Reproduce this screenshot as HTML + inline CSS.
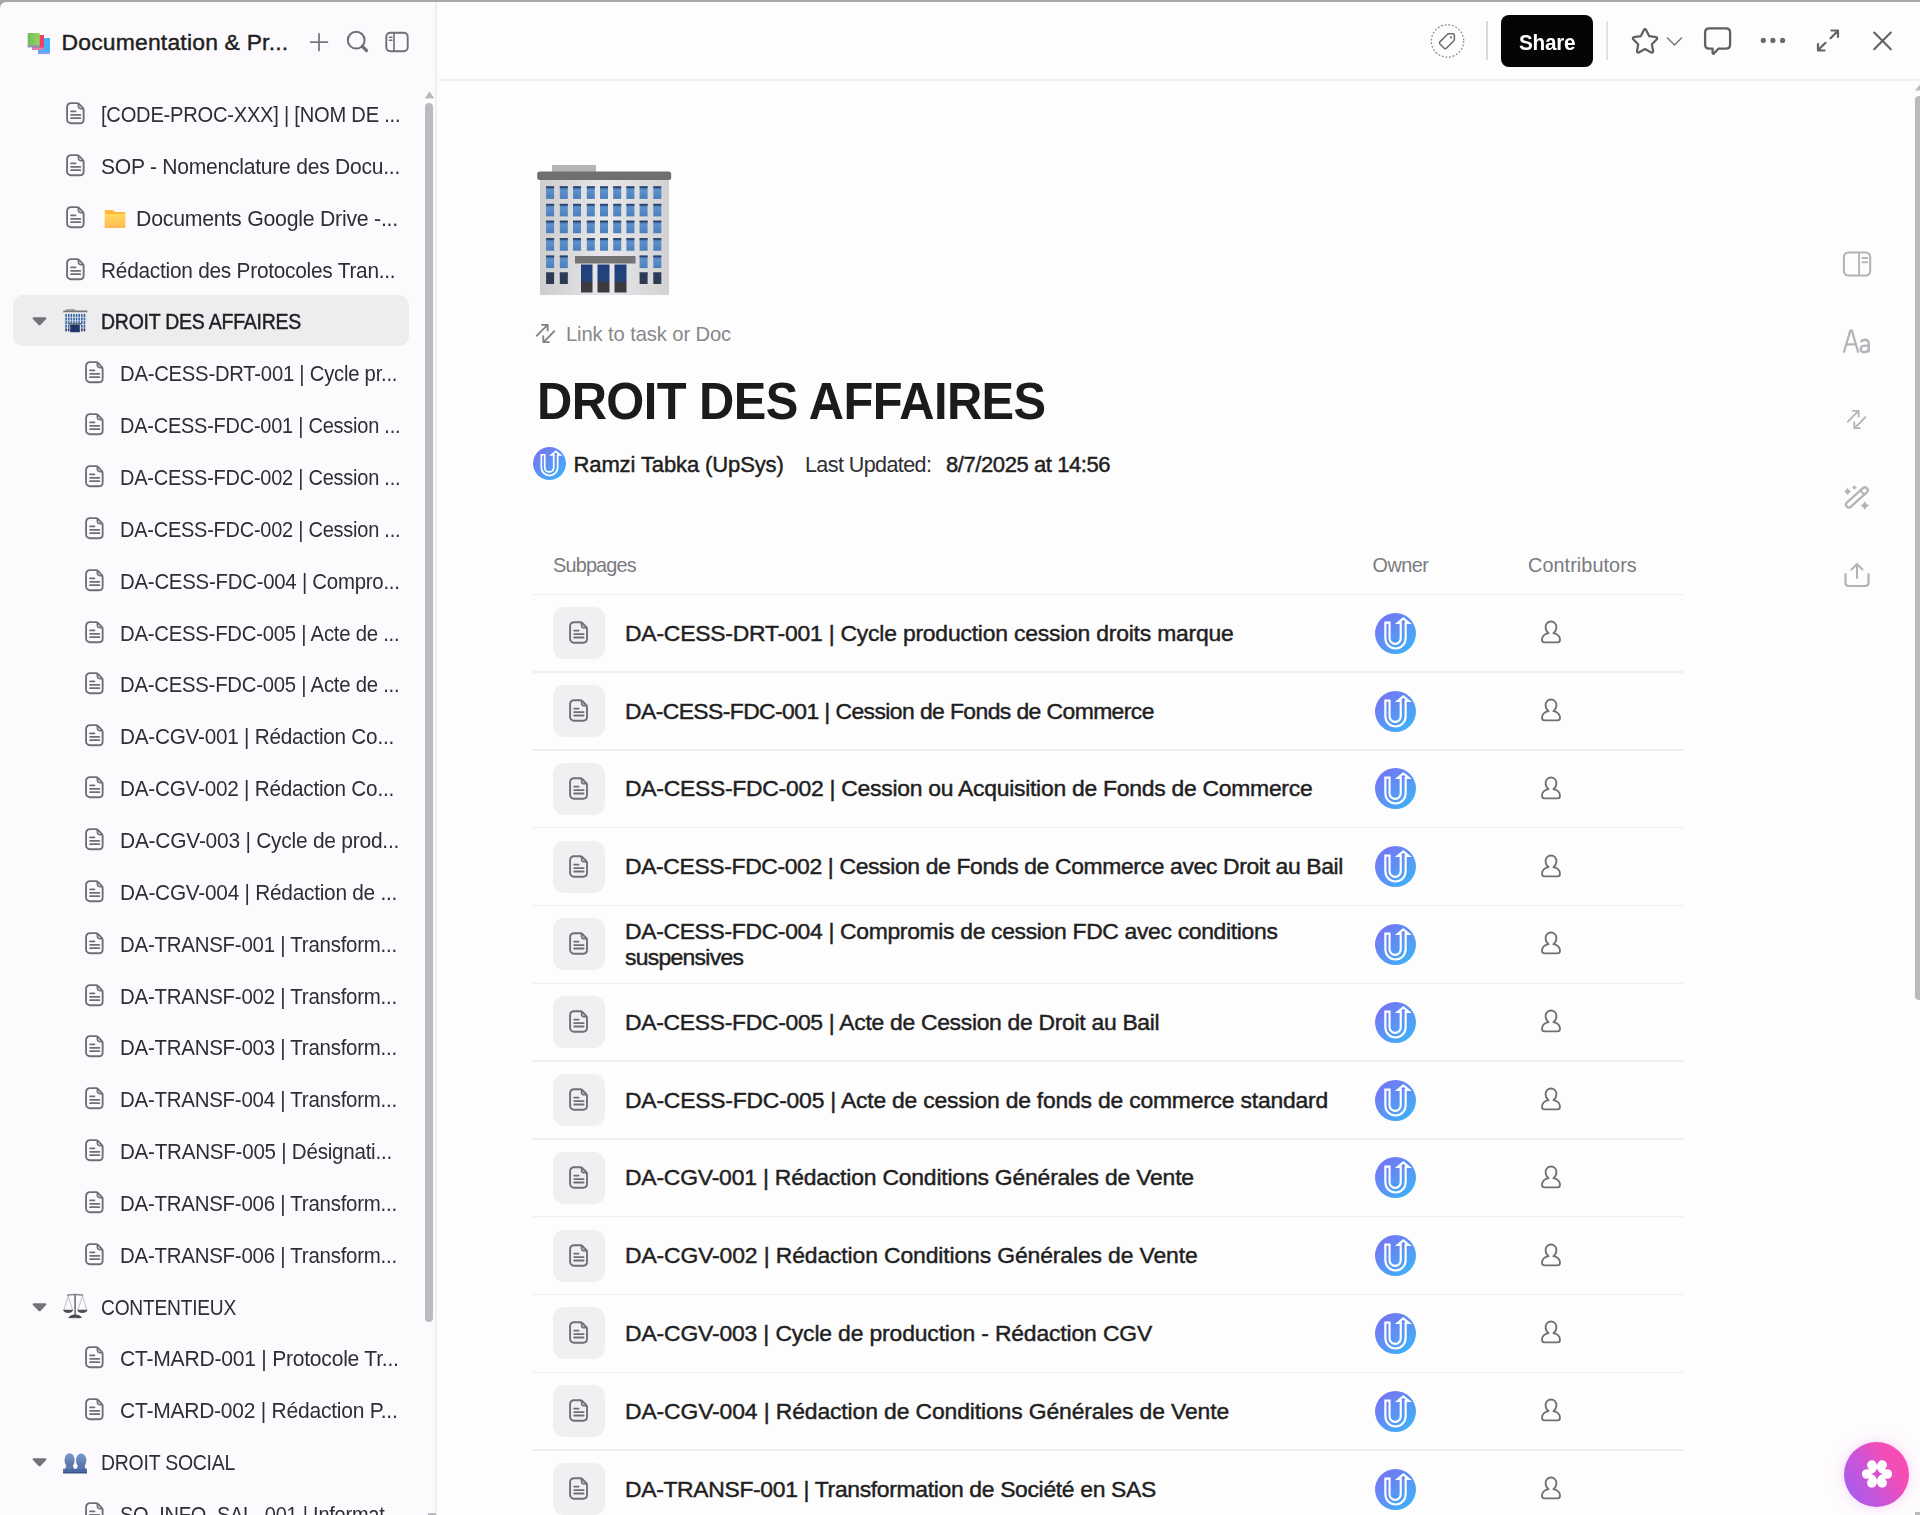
<!DOCTYPE html><html><head><meta charset="utf-8"><style>
html,body{margin:0;padding:0;width:1920px;height:1515px;overflow:hidden;background:#fefdfe;}
body{position:relative;font-family:"Liberation Sans",sans-serif;}
.t{position:absolute;white-space:nowrap;line-height:1;}
.semi{-webkit-text-stroke:0.45px currentColor;}
.ic{position:absolute;line-height:0;}
.ic svg{display:block;overflow:visible;}
</style></head><body>
<div style="position:absolute;left:0;top:0;width:1920px;height:2px;background:#a7a7aa"></div>
<div style="position:absolute;left:0;top:0;width:8px;height:8px;background:#a7a7aa"></div>
<div style="position:absolute;left:0;top:2px;width:435px;height:1513px;background:#fcfafd;border-top-left-radius:6px"></div>
<div style="position:absolute;left:435px;top:2px;width:2px;height:1513px;background:#efeef1"></div>
<div style="position:absolute;left:438px;top:79px;width:1482px;height:2px;background:#f0eff2"></div>
<div class="ic" style="left:27px;top:32px"><svg width="24" height="23" viewBox="0 0 24 23">
<defs><linearGradient id="bg1" x1="0" y1="0" x2="1" y2="0"><stop offset="0" stop-color="#6cbf5a"/><stop offset="1" stop-color="#98d45f"/></linearGradient></defs>
<rect x="11" y="6" width="12" height="15" fill="#3fb3f6"/><rect x="11" y="19.8" width="12" height="2.2" fill="#8d9cf4"/>
<rect x="5" y="3" width="12" height="13.5" fill="#f13f68"/><rect x="5" y="15.6" width="12" height="2.4" fill="#dd7fb0"/>
<rect x="0.7" y="1" width="12" height="13" fill="url(#bg1)"/><rect x="0.7" y="13" width="12" height="2.5" fill="#8d9ab0"/>
</svg></div>
<div class="ic" style="left:309px;top:32px"><svg width="20" height="20" viewBox="0 0 20 20"><path d="M10 2v16.5M1.8 10.2h16.6" stroke="#77777c" stroke-width="1.8" stroke-linecap="round"/></svg></div>
<div class="ic" style="left:346px;top:30px"><svg width="24" height="24" viewBox="0 0 24 24"><circle cx="10.2" cy="10.2" r="8.4" fill="none" stroke="#6f6f74" stroke-width="2"/><path d="M16.3 16.3l4.2 4.2" stroke="#6f6f74" stroke-width="3.2" stroke-linecap="round"/></svg></div>
<div class="ic" style="left:385px;top:31px"><svg width="24" height="22" viewBox="0 0 24 22"><rect x="1.3" y="1.8" width="21.4" height="18.5" rx="4" fill="none" stroke="#6f6f74" stroke-width="1.9"/><path d="M9 2v18M4.5 6.2h2.4M4.5 9.2h2.4" stroke="#6f6f74" stroke-width="1.6" stroke-linecap="round"/></svg></div>
<div style="position:absolute;left:13px;top:295px;width:396px;height:51px;background:#edecef;border-radius:10px"></div>
<div class="ic" style="left:424.5px;top:91px"><svg width="9" height="8" viewBox="0 0 9 8"><path d="M4.5 1L8.5 7H0.5z" fill="#bcbbbe" stroke="#bcbbbe" stroke-width="1" stroke-linejoin="round"/></svg></div>
<div style="position:absolute;left:425px;top:103px;width:8px;height:1219px;background:#bcbabe;border-radius:4px"></div>
<div style="position:absolute;left:428px;top:1513px;width:8px;height:2px;background:#bcbabe"></div>
<div class="ic" style="left:65.5px;top:102.0px;transform:scale(0.980);transform-origin:0 0"><svg class="doc" width="20" height="23" viewBox="0 0 20 23"><path d="M5 1.2h6.3c.8 0 1.3.2 1.9.8l4 4c.6.6.8 1.1.8 1.9V17.8c0 2.2-1.6 3.9-3.9 3.9H5c-2.2 0-3.9-1.6-3.9-3.9V5c0-2.2 1.6-3.8 3.9-3.8z" fill="none" stroke="#6f6f74" stroke-width="1.9"/><path d="M12.6 1.4v2.8c0 1.5 1 2.6 2.6 2.6H18" fill="none" stroke="#6f6f74" stroke-width="1.6"/><path d="M5.2 9.6h4.4M5.2 13.1h9.4M5.2 16.5h9.4" stroke="#6f6f74" stroke-width="1.9" stroke-linecap="round"/></svg></div>
<div class="ic" style="left:65.5px;top:153.8px;transform:scale(0.980);transform-origin:0 0"><svg class="doc" width="20" height="23" viewBox="0 0 20 23"><path d="M5 1.2h6.3c.8 0 1.3.2 1.9.8l4 4c.6.6.8 1.1.8 1.9V17.8c0 2.2-1.6 3.9-3.9 3.9H5c-2.2 0-3.9-1.6-3.9-3.9V5c0-2.2 1.6-3.8 3.9-3.8z" fill="none" stroke="#6f6f74" stroke-width="1.9"/><path d="M12.6 1.4v2.8c0 1.5 1 2.6 2.6 2.6H18" fill="none" stroke="#6f6f74" stroke-width="1.6"/><path d="M5.2 9.6h4.4M5.2 13.1h9.4M5.2 16.5h9.4" stroke="#6f6f74" stroke-width="1.9" stroke-linecap="round"/></svg></div>
<div class="ic" style="left:65.5px;top:205.7px;transform:scale(0.980);transform-origin:0 0"><svg class="doc" width="20" height="23" viewBox="0 0 20 23"><path d="M5 1.2h6.3c.8 0 1.3.2 1.9.8l4 4c.6.6.8 1.1.8 1.9V17.8c0 2.2-1.6 3.9-3.9 3.9H5c-2.2 0-3.9-1.6-3.9-3.9V5c0-2.2 1.6-3.8 3.9-3.8z" fill="none" stroke="#6f6f74" stroke-width="1.9"/><path d="M12.6 1.4v2.8c0 1.5 1 2.6 2.6 2.6H18" fill="none" stroke="#6f6f74" stroke-width="1.6"/><path d="M5.2 9.6h4.4M5.2 13.1h9.4M5.2 16.5h9.4" stroke="#6f6f74" stroke-width="1.9" stroke-linecap="round"/></svg></div>
<div class="ic" style="left:104px;top:208.7px"><svg width="22" height="19" viewBox="0 0 22 19"><defs><linearGradient id="fg" x1="0" y1="0" x2="0" y2="1"><stop offset="0" stop-color="#ffe05e"/><stop offset="0.15" stop-color="#ffd35a"/><stop offset="1" stop-color="#ffbd55"/></linearGradient></defs><path d="M0.8 2.2c0-.8.5-1.3 1.3-1.3h6.2c.6 0 1 .3 1.4.7l1.3 1.5h9.4c.5 0 .8.4.8.8V18.5H0.8z" fill="#ffb83a"/><rect x="0.8" y="5.2" width="20.4" height="13.3" fill="url(#fg)"/><rect x="0.8" y="17.6" width="20.4" height="0.9" fill="#ffad45"/></svg></div>
<div class="ic" style="left:65.5px;top:257.6px;transform:scale(0.980);transform-origin:0 0"><svg class="doc" width="20" height="23" viewBox="0 0 20 23"><path d="M5 1.2h6.3c.8 0 1.3.2 1.9.8l4 4c.6.6.8 1.1.8 1.9V17.8c0 2.2-1.6 3.9-3.9 3.9H5c-2.2 0-3.9-1.6-3.9-3.9V5c0-2.2 1.6-3.8 3.9-3.8z" fill="none" stroke="#6f6f74" stroke-width="1.9"/><path d="M12.6 1.4v2.8c0 1.5 1 2.6 2.6 2.6H18" fill="none" stroke="#6f6f74" stroke-width="1.6"/><path d="M5.2 9.6h4.4M5.2 13.1h9.4M5.2 16.5h9.4" stroke="#6f6f74" stroke-width="1.9" stroke-linecap="round"/></svg></div>
<div class="ic" style="left:31.5px;top:316.4px"><svg width="15" height="10" viewBox="0 0 15 10"><path d="M1.8 1.2h11.4c1 0 1.5 1 .9 1.8L8.5 8.9c-.5.6-1.4.6-1.9 0L.9 3C.3 2.2.8 1.2 1.8 1.2z" fill="#737378"/></svg></div>
<div class="ic" style="left:63px;top:309px"><svg width="25" height="24" viewBox="0 0 25 24"><rect x="3" y="0" width="9" height="1.8" fill="#a9a9ac"/><rect x="0.3" y="1.5" width="24" height="2" fill="#747477"/><rect x="1" y="3.4" width="22.8" height="20" fill="#e6e6ea"/><rect x="2.30" y="5.0" width="1.6" height="2.9" fill="#3566a8"/><rect x="2.30" y="8.6" width="1.6" height="2.9" fill="#3566a8"/><rect x="2.30" y="12.2" width="1.6" height="2.9" fill="#3566a8"/><rect x="2.30" y="15.8" width="1.6" height="2.9" fill="#3566a8"/><rect x="2.30" y="19.4" width="1.6" height="2.9" fill="#2d3f66"/><rect x="4.92" y="5.0" width="1.6" height="2.9" fill="#3566a8"/><rect x="4.92" y="8.6" width="1.6" height="2.9" fill="#3566a8"/><rect x="4.92" y="12.2" width="1.6" height="2.9" fill="#3566a8"/><rect x="4.92" y="15.8" width="1.6" height="2.9" fill="#3566a8"/><rect x="4.92" y="19.4" width="1.6" height="2.9" fill="#2d3f66"/><rect x="7.54" y="5.0" width="1.6" height="2.9" fill="#3566a8"/><rect x="7.54" y="8.6" width="1.6" height="2.9" fill="#3566a8"/><rect x="7.54" y="12.2" width="1.6" height="2.9" fill="#3566a8"/><rect x="10.16" y="5.0" width="1.6" height="2.9" fill="#3566a8"/><rect x="10.16" y="8.6" width="1.6" height="2.9" fill="#3566a8"/><rect x="10.16" y="12.2" width="1.6" height="2.9" fill="#3566a8"/><rect x="12.78" y="5.0" width="1.6" height="2.9" fill="#3566a8"/><rect x="12.78" y="8.6" width="1.6" height="2.9" fill="#3566a8"/><rect x="12.78" y="12.2" width="1.6" height="2.9" fill="#3566a8"/><rect x="15.40" y="5.0" width="1.6" height="2.9" fill="#3566a8"/><rect x="15.40" y="8.6" width="1.6" height="2.9" fill="#3566a8"/><rect x="15.40" y="12.2" width="1.6" height="2.9" fill="#3566a8"/><rect x="18.02" y="5.0" width="1.6" height="2.9" fill="#3566a8"/><rect x="18.02" y="8.6" width="1.6" height="2.9" fill="#3566a8"/><rect x="18.02" y="12.2" width="1.6" height="2.9" fill="#3566a8"/><rect x="18.02" y="15.8" width="1.6" height="2.9" fill="#3566a8"/><rect x="18.02" y="19.4" width="1.6" height="2.9" fill="#2d3f66"/><rect x="20.64" y="5.0" width="1.6" height="2.9" fill="#3566a8"/><rect x="20.64" y="8.6" width="1.6" height="2.9" fill="#3566a8"/><rect x="20.64" y="12.2" width="1.6" height="2.9" fill="#3566a8"/><rect x="20.64" y="15.8" width="1.6" height="2.9" fill="#3566a8"/><rect x="20.64" y="19.4" width="1.6" height="2.9" fill="#2d3f66"/><rect x="6" y="14.2" width="12" height="1.6" fill="#6d6e75"/><rect x="7.2" y="15.8" width="9.6" height="7.4" fill="#1f3468"/></svg></div>
<div class="ic" style="left:84.5px;top:361.2px;transform:scale(0.980);transform-origin:0 0"><svg class="doc" width="20" height="23" viewBox="0 0 20 23"><path d="M5 1.2h6.3c.8 0 1.3.2 1.9.8l4 4c.6.6.8 1.1.8 1.9V17.8c0 2.2-1.6 3.9-3.9 3.9H5c-2.2 0-3.9-1.6-3.9-3.9V5c0-2.2 1.6-3.8 3.9-3.8z" fill="none" stroke="#6f6f74" stroke-width="1.9"/><path d="M12.6 1.4v2.8c0 1.5 1 2.6 2.6 2.6H18" fill="none" stroke="#6f6f74" stroke-width="1.6"/><path d="M5.2 9.6h4.4M5.2 13.1h9.4M5.2 16.5h9.4" stroke="#6f6f74" stroke-width="1.9" stroke-linecap="round"/></svg></div>
<div class="ic" style="left:84.5px;top:413.1px;transform:scale(0.980);transform-origin:0 0"><svg class="doc" width="20" height="23" viewBox="0 0 20 23"><path d="M5 1.2h6.3c.8 0 1.3.2 1.9.8l4 4c.6.6.8 1.1.8 1.9V17.8c0 2.2-1.6 3.9-3.9 3.9H5c-2.2 0-3.9-1.6-3.9-3.9V5c0-2.2 1.6-3.8 3.9-3.8z" fill="none" stroke="#6f6f74" stroke-width="1.9"/><path d="M12.6 1.4v2.8c0 1.5 1 2.6 2.6 2.6H18" fill="none" stroke="#6f6f74" stroke-width="1.6"/><path d="M5.2 9.6h4.4M5.2 13.1h9.4M5.2 16.5h9.4" stroke="#6f6f74" stroke-width="1.9" stroke-linecap="round"/></svg></div>
<div class="ic" style="left:84.5px;top:464.9px;transform:scale(0.980);transform-origin:0 0"><svg class="doc" width="20" height="23" viewBox="0 0 20 23"><path d="M5 1.2h6.3c.8 0 1.3.2 1.9.8l4 4c.6.6.8 1.1.8 1.9V17.8c0 2.2-1.6 3.9-3.9 3.9H5c-2.2 0-3.9-1.6-3.9-3.9V5c0-2.2 1.6-3.8 3.9-3.8z" fill="none" stroke="#6f6f74" stroke-width="1.9"/><path d="M12.6 1.4v2.8c0 1.5 1 2.6 2.6 2.6H18" fill="none" stroke="#6f6f74" stroke-width="1.6"/><path d="M5.2 9.6h4.4M5.2 13.1h9.4M5.2 16.5h9.4" stroke="#6f6f74" stroke-width="1.9" stroke-linecap="round"/></svg></div>
<div class="ic" style="left:84.5px;top:516.8px;transform:scale(0.980);transform-origin:0 0"><svg class="doc" width="20" height="23" viewBox="0 0 20 23"><path d="M5 1.2h6.3c.8 0 1.3.2 1.9.8l4 4c.6.6.8 1.1.8 1.9V17.8c0 2.2-1.6 3.9-3.9 3.9H5c-2.2 0-3.9-1.6-3.9-3.9V5c0-2.2 1.6-3.8 3.9-3.8z" fill="none" stroke="#6f6f74" stroke-width="1.9"/><path d="M12.6 1.4v2.8c0 1.5 1 2.6 2.6 2.6H18" fill="none" stroke="#6f6f74" stroke-width="1.6"/><path d="M5.2 9.6h4.4M5.2 13.1h9.4M5.2 16.5h9.4" stroke="#6f6f74" stroke-width="1.9" stroke-linecap="round"/></svg></div>
<div class="ic" style="left:84.5px;top:568.7px;transform:scale(0.980);transform-origin:0 0"><svg class="doc" width="20" height="23" viewBox="0 0 20 23"><path d="M5 1.2h6.3c.8 0 1.3.2 1.9.8l4 4c.6.6.8 1.1.8 1.9V17.8c0 2.2-1.6 3.9-3.9 3.9H5c-2.2 0-3.9-1.6-3.9-3.9V5c0-2.2 1.6-3.8 3.9-3.8z" fill="none" stroke="#6f6f74" stroke-width="1.9"/><path d="M12.6 1.4v2.8c0 1.5 1 2.6 2.6 2.6H18" fill="none" stroke="#6f6f74" stroke-width="1.6"/><path d="M5.2 9.6h4.4M5.2 13.1h9.4M5.2 16.5h9.4" stroke="#6f6f74" stroke-width="1.9" stroke-linecap="round"/></svg></div>
<div class="ic" style="left:84.5px;top:620.5px;transform:scale(0.980);transform-origin:0 0"><svg class="doc" width="20" height="23" viewBox="0 0 20 23"><path d="M5 1.2h6.3c.8 0 1.3.2 1.9.8l4 4c.6.6.8 1.1.8 1.9V17.8c0 2.2-1.6 3.9-3.9 3.9H5c-2.2 0-3.9-1.6-3.9-3.9V5c0-2.2 1.6-3.8 3.9-3.8z" fill="none" stroke="#6f6f74" stroke-width="1.9"/><path d="M12.6 1.4v2.8c0 1.5 1 2.6 2.6 2.6H18" fill="none" stroke="#6f6f74" stroke-width="1.6"/><path d="M5.2 9.6h4.4M5.2 13.1h9.4M5.2 16.5h9.4" stroke="#6f6f74" stroke-width="1.9" stroke-linecap="round"/></svg></div>
<div class="ic" style="left:84.5px;top:672.4px;transform:scale(0.980);transform-origin:0 0"><svg class="doc" width="20" height="23" viewBox="0 0 20 23"><path d="M5 1.2h6.3c.8 0 1.3.2 1.9.8l4 4c.6.6.8 1.1.8 1.9V17.8c0 2.2-1.6 3.9-3.9 3.9H5c-2.2 0-3.9-1.6-3.9-3.9V5c0-2.2 1.6-3.8 3.9-3.8z" fill="none" stroke="#6f6f74" stroke-width="1.9"/><path d="M12.6 1.4v2.8c0 1.5 1 2.6 2.6 2.6H18" fill="none" stroke="#6f6f74" stroke-width="1.6"/><path d="M5.2 9.6h4.4M5.2 13.1h9.4M5.2 16.5h9.4" stroke="#6f6f74" stroke-width="1.9" stroke-linecap="round"/></svg></div>
<div class="ic" style="left:84.5px;top:724.2px;transform:scale(0.980);transform-origin:0 0"><svg class="doc" width="20" height="23" viewBox="0 0 20 23"><path d="M5 1.2h6.3c.8 0 1.3.2 1.9.8l4 4c.6.6.8 1.1.8 1.9V17.8c0 2.2-1.6 3.9-3.9 3.9H5c-2.2 0-3.9-1.6-3.9-3.9V5c0-2.2 1.6-3.8 3.9-3.8z" fill="none" stroke="#6f6f74" stroke-width="1.9"/><path d="M12.6 1.4v2.8c0 1.5 1 2.6 2.6 2.6H18" fill="none" stroke="#6f6f74" stroke-width="1.6"/><path d="M5.2 9.6h4.4M5.2 13.1h9.4M5.2 16.5h9.4" stroke="#6f6f74" stroke-width="1.9" stroke-linecap="round"/></svg></div>
<div class="ic" style="left:84.5px;top:776.1px;transform:scale(0.980);transform-origin:0 0"><svg class="doc" width="20" height="23" viewBox="0 0 20 23"><path d="M5 1.2h6.3c.8 0 1.3.2 1.9.8l4 4c.6.6.8 1.1.8 1.9V17.8c0 2.2-1.6 3.9-3.9 3.9H5c-2.2 0-3.9-1.6-3.9-3.9V5c0-2.2 1.6-3.8 3.9-3.8z" fill="none" stroke="#6f6f74" stroke-width="1.9"/><path d="M12.6 1.4v2.8c0 1.5 1 2.6 2.6 2.6H18" fill="none" stroke="#6f6f74" stroke-width="1.6"/><path d="M5.2 9.6h4.4M5.2 13.1h9.4M5.2 16.5h9.4" stroke="#6f6f74" stroke-width="1.9" stroke-linecap="round"/></svg></div>
<div class="ic" style="left:84.5px;top:827.9px;transform:scale(0.980);transform-origin:0 0"><svg class="doc" width="20" height="23" viewBox="0 0 20 23"><path d="M5 1.2h6.3c.8 0 1.3.2 1.9.8l4 4c.6.6.8 1.1.8 1.9V17.8c0 2.2-1.6 3.9-3.9 3.9H5c-2.2 0-3.9-1.6-3.9-3.9V5c0-2.2 1.6-3.8 3.9-3.8z" fill="none" stroke="#6f6f74" stroke-width="1.9"/><path d="M12.6 1.4v2.8c0 1.5 1 2.6 2.6 2.6H18" fill="none" stroke="#6f6f74" stroke-width="1.6"/><path d="M5.2 9.6h4.4M5.2 13.1h9.4M5.2 16.5h9.4" stroke="#6f6f74" stroke-width="1.9" stroke-linecap="round"/></svg></div>
<div class="ic" style="left:84.5px;top:879.8px;transform:scale(0.980);transform-origin:0 0"><svg class="doc" width="20" height="23" viewBox="0 0 20 23"><path d="M5 1.2h6.3c.8 0 1.3.2 1.9.8l4 4c.6.6.8 1.1.8 1.9V17.8c0 2.2-1.6 3.9-3.9 3.9H5c-2.2 0-3.9-1.6-3.9-3.9V5c0-2.2 1.6-3.8 3.9-3.8z" fill="none" stroke="#6f6f74" stroke-width="1.9"/><path d="M12.6 1.4v2.8c0 1.5 1 2.6 2.6 2.6H18" fill="none" stroke="#6f6f74" stroke-width="1.6"/><path d="M5.2 9.6h4.4M5.2 13.1h9.4M5.2 16.5h9.4" stroke="#6f6f74" stroke-width="1.9" stroke-linecap="round"/></svg></div>
<div class="ic" style="left:84.5px;top:931.6px;transform:scale(0.980);transform-origin:0 0"><svg class="doc" width="20" height="23" viewBox="0 0 20 23"><path d="M5 1.2h6.3c.8 0 1.3.2 1.9.8l4 4c.6.6.8 1.1.8 1.9V17.8c0 2.2-1.6 3.9-3.9 3.9H5c-2.2 0-3.9-1.6-3.9-3.9V5c0-2.2 1.6-3.8 3.9-3.8z" fill="none" stroke="#6f6f74" stroke-width="1.9"/><path d="M12.6 1.4v2.8c0 1.5 1 2.6 2.6 2.6H18" fill="none" stroke="#6f6f74" stroke-width="1.6"/><path d="M5.2 9.6h4.4M5.2 13.1h9.4M5.2 16.5h9.4" stroke="#6f6f74" stroke-width="1.9" stroke-linecap="round"/></svg></div>
<div class="ic" style="left:84.5px;top:983.5px;transform:scale(0.980);transform-origin:0 0"><svg class="doc" width="20" height="23" viewBox="0 0 20 23"><path d="M5 1.2h6.3c.8 0 1.3.2 1.9.8l4 4c.6.6.8 1.1.8 1.9V17.8c0 2.2-1.6 3.9-3.9 3.9H5c-2.2 0-3.9-1.6-3.9-3.9V5c0-2.2 1.6-3.8 3.9-3.8z" fill="none" stroke="#6f6f74" stroke-width="1.9"/><path d="M12.6 1.4v2.8c0 1.5 1 2.6 2.6 2.6H18" fill="none" stroke="#6f6f74" stroke-width="1.6"/><path d="M5.2 9.6h4.4M5.2 13.1h9.4M5.2 16.5h9.4" stroke="#6f6f74" stroke-width="1.9" stroke-linecap="round"/></svg></div>
<div class="ic" style="left:84.5px;top:1035.3px;transform:scale(0.980);transform-origin:0 0"><svg class="doc" width="20" height="23" viewBox="0 0 20 23"><path d="M5 1.2h6.3c.8 0 1.3.2 1.9.8l4 4c.6.6.8 1.1.8 1.9V17.8c0 2.2-1.6 3.9-3.9 3.9H5c-2.2 0-3.9-1.6-3.9-3.9V5c0-2.2 1.6-3.8 3.9-3.8z" fill="none" stroke="#6f6f74" stroke-width="1.9"/><path d="M12.6 1.4v2.8c0 1.5 1 2.6 2.6 2.6H18" fill="none" stroke="#6f6f74" stroke-width="1.6"/><path d="M5.2 9.6h4.4M5.2 13.1h9.4M5.2 16.5h9.4" stroke="#6f6f74" stroke-width="1.9" stroke-linecap="round"/></svg></div>
<div class="ic" style="left:84.5px;top:1087.2px;transform:scale(0.980);transform-origin:0 0"><svg class="doc" width="20" height="23" viewBox="0 0 20 23"><path d="M5 1.2h6.3c.8 0 1.3.2 1.9.8l4 4c.6.6.8 1.1.8 1.9V17.8c0 2.2-1.6 3.9-3.9 3.9H5c-2.2 0-3.9-1.6-3.9-3.9V5c0-2.2 1.6-3.8 3.9-3.8z" fill="none" stroke="#6f6f74" stroke-width="1.9"/><path d="M12.6 1.4v2.8c0 1.5 1 2.6 2.6 2.6H18" fill="none" stroke="#6f6f74" stroke-width="1.6"/><path d="M5.2 9.6h4.4M5.2 13.1h9.4M5.2 16.5h9.4" stroke="#6f6f74" stroke-width="1.9" stroke-linecap="round"/></svg></div>
<div class="ic" style="left:84.5px;top:1139.0px;transform:scale(0.980);transform-origin:0 0"><svg class="doc" width="20" height="23" viewBox="0 0 20 23"><path d="M5 1.2h6.3c.8 0 1.3.2 1.9.8l4 4c.6.6.8 1.1.8 1.9V17.8c0 2.2-1.6 3.9-3.9 3.9H5c-2.2 0-3.9-1.6-3.9-3.9V5c0-2.2 1.6-3.8 3.9-3.8z" fill="none" stroke="#6f6f74" stroke-width="1.9"/><path d="M12.6 1.4v2.8c0 1.5 1 2.6 2.6 2.6H18" fill="none" stroke="#6f6f74" stroke-width="1.6"/><path d="M5.2 9.6h4.4M5.2 13.1h9.4M5.2 16.5h9.4" stroke="#6f6f74" stroke-width="1.9" stroke-linecap="round"/></svg></div>
<div class="ic" style="left:84.5px;top:1190.9px;transform:scale(0.980);transform-origin:0 0"><svg class="doc" width="20" height="23" viewBox="0 0 20 23"><path d="M5 1.2h6.3c.8 0 1.3.2 1.9.8l4 4c.6.6.8 1.1.8 1.9V17.8c0 2.2-1.6 3.9-3.9 3.9H5c-2.2 0-3.9-1.6-3.9-3.9V5c0-2.2 1.6-3.8 3.9-3.8z" fill="none" stroke="#6f6f74" stroke-width="1.9"/><path d="M12.6 1.4v2.8c0 1.5 1 2.6 2.6 2.6H18" fill="none" stroke="#6f6f74" stroke-width="1.6"/><path d="M5.2 9.6h4.4M5.2 13.1h9.4M5.2 16.5h9.4" stroke="#6f6f74" stroke-width="1.9" stroke-linecap="round"/></svg></div>
<div class="ic" style="left:84.5px;top:1242.7px;transform:scale(0.980);transform-origin:0 0"><svg class="doc" width="20" height="23" viewBox="0 0 20 23"><path d="M5 1.2h6.3c.8 0 1.3.2 1.9.8l4 4c.6.6.8 1.1.8 1.9V17.8c0 2.2-1.6 3.9-3.9 3.9H5c-2.2 0-3.9-1.6-3.9-3.9V5c0-2.2 1.6-3.8 3.9-3.8z" fill="none" stroke="#6f6f74" stroke-width="1.9"/><path d="M12.6 1.4v2.8c0 1.5 1 2.6 2.6 2.6H18" fill="none" stroke="#6f6f74" stroke-width="1.6"/><path d="M5.2 9.6h4.4M5.2 13.1h9.4M5.2 16.5h9.4" stroke="#6f6f74" stroke-width="1.9" stroke-linecap="round"/></svg></div>
<div class="ic" style="left:31.5px;top:1301.5px"><svg width="15" height="10" viewBox="0 0 15 10"><path d="M1.8 1.2h11.4c1 0 1.5 1 .9 1.8L8.5 8.9c-.5.6-1.4.6-1.9 0L.9 3C.3 2.2.8 1.2 1.8 1.2z" fill="#737378"/></svg></div>
<div class="ic" style="left:58px;top:1288.0px"><svg width="36" height="36" viewBox="0 0 36 36"><path d="M10.2 8.2L6 21.8M10.2 8.2L14.6 21.8M24.4 8.2L20 21.8M24.4 8.2L28.8 21.8" stroke="#b0b0b4" stroke-width="0.8"/><path d="M9 7.3Q17.1 5.6 25.2 7.3" fill="none" stroke="#8a8a8e" stroke-width="1.4"/><path d="M17.1 6.2V27.5" stroke="#77777b" stroke-width="1.7"/><path d="M5 21.8H15.2Q14 25 10.1 25 6.2 25 5 21.8z" fill="#4f4f54"/><path d="M19.1 21.8H29.5Q28.3 25 24.3 25 20.3 25 19.1 21.8z" fill="#4f4f54"/><path d="M10.2 30Q12 26.6 17.1 26.4 22.2 26.6 24 30z" fill="#47474c"/><ellipse cx="17.1" cy="30.5" rx="5.5" ry="0.7" fill="#d8d8dc"/></svg></div>
<div class="ic" style="left:84.5px;top:1346.4px;transform:scale(0.980);transform-origin:0 0"><svg class="doc" width="20" height="23" viewBox="0 0 20 23"><path d="M5 1.2h6.3c.8 0 1.3.2 1.9.8l4 4c.6.6.8 1.1.8 1.9V17.8c0 2.2-1.6 3.9-3.9 3.9H5c-2.2 0-3.9-1.6-3.9-3.9V5c0-2.2 1.6-3.8 3.9-3.8z" fill="none" stroke="#6f6f74" stroke-width="1.9"/><path d="M12.6 1.4v2.8c0 1.5 1 2.6 2.6 2.6H18" fill="none" stroke="#6f6f74" stroke-width="1.6"/><path d="M5.2 9.6h4.4M5.2 13.1h9.4M5.2 16.5h9.4" stroke="#6f6f74" stroke-width="1.9" stroke-linecap="round"/></svg></div>
<div class="ic" style="left:84.5px;top:1398.2px;transform:scale(0.980);transform-origin:0 0"><svg class="doc" width="20" height="23" viewBox="0 0 20 23"><path d="M5 1.2h6.3c.8 0 1.3.2 1.9.8l4 4c.6.6.8 1.1.8 1.9V17.8c0 2.2-1.6 3.9-3.9 3.9H5c-2.2 0-3.9-1.6-3.9-3.9V5c0-2.2 1.6-3.8 3.9-3.8z" fill="none" stroke="#6f6f74" stroke-width="1.9"/><path d="M12.6 1.4v2.8c0 1.5 1 2.6 2.6 2.6H18" fill="none" stroke="#6f6f74" stroke-width="1.6"/><path d="M5.2 9.6h4.4M5.2 13.1h9.4M5.2 16.5h9.4" stroke="#6f6f74" stroke-width="1.9" stroke-linecap="round"/></svg></div>
<div class="ic" style="left:31.5px;top:1457.1px"><svg width="15" height="10" viewBox="0 0 15 10"><path d="M1.8 1.2h11.4c1 0 1.5 1 .9 1.8L8.5 8.9c-.5.6-1.4.6-1.9 0L.9 3C.3 2.2.8 1.2 1.8 1.2z" fill="#737378"/></svg></div>
<div class="ic" style="left:58px;top:1446.0px"><svg width="36" height="36" viewBox="0 0 36 36"><defs><linearGradient id="ppl" x1="0" y1="0" x2="0" y2="1"><stop offset="0" stop-color="#6f9bd0"/><stop offset="0.5" stop-color="#6c88b8"/><stop offset="1" stop-color="#4e6aa6"/></linearGradient></defs><ellipse cx="11.6" cy="14.1" rx="5.1" ry="6.8" fill="url(#ppl)"/><ellipse cx="23.2" cy="14.3" rx="5.2" ry="6.9" fill="url(#ppl)"/><path d="M8.6 19h6l1.5 4H7z M20.2 19h6l1.7 4H18.6z" fill="#5d78ad"/><rect x="5.1" y="22.8" width="23.9" height="4.5" fill="#4d69a4"/><rect x="5.1" y="26" width="23.9" height="1.3" fill="#3a5588"/></svg></div>
<div class="ic" style="left:84.5px;top:1502.0px;transform:scale(0.980);transform-origin:0 0"><svg class="doc" width="20" height="23" viewBox="0 0 20 23"><path d="M5 1.2h6.3c.8 0 1.3.2 1.9.8l4 4c.6.6.8 1.1.8 1.9V17.8c0 2.2-1.6 3.9-3.9 3.9H5c-2.2 0-3.9-1.6-3.9-3.9V5c0-2.2 1.6-3.8 3.9-3.8z" fill="none" stroke="#6f6f74" stroke-width="1.9"/><path d="M12.6 1.4v2.8c0 1.5 1 2.6 2.6 2.6H18" fill="none" stroke="#6f6f74" stroke-width="1.6"/><path d="M5.2 9.6h4.4M5.2 13.1h9.4M5.2 16.5h9.4" stroke="#6f6f74" stroke-width="1.9" stroke-linecap="round"/></svg></div>
<div class="ic" style="left:1430px;top:23.5px"><svg width="35" height="35" viewBox="0 0 35 35"><circle cx="17.5" cy="17" r="16.2" fill="none" stroke="#8a8a8e" stroke-width="1.3" stroke-dasharray="1.8 1.85"/><g transform="translate(0 -0.9)"><path d="M14.2 25.2l-4.3-4.3c-.6-.6-.6-1.5 0-2.1l7.6-7.6c.3-.3.7-.5 1.1-.5h4.3c.8 0 1.5.7 1.5 1.5v4.3c0 .4-.2.8-.5 1.1l-7.6 7.6c-.6.6-1.5.6-2.1 0z" fill="none" stroke="#6a6a6e" stroke-width="1.5"/><circle cx="21" cy="14.2" r="1.1" fill="#6a6a6e"/></g></svg></div>
<div style="position:absolute;left:1486px;top:21px;width:2px;height:39px;background:#d9d8db"></div>
<div style="position:absolute;left:1501px;top:15px;width:91.5px;height:52px;background:#050406;border-radius:8px"></div>
<div style="position:absolute;left:1605.5px;top:21px;width:2px;height:39px;background:#e2e1e4"></div>
<div class="ic" style="left:1630px;top:27px"><svg width="30" height="28" viewBox="0 0 30 28"><path d="M15 2.2c.5 0 .9.3 1.1.7l3.2 6.3 6.9 1c1 .1 1.4 1.4.7 2.1l-5 4.9 1.2 6.9c.2 1-.9 1.8-1.8 1.3L15 22.1l-6.2 3.3c-.9.5-2-.3-1.8-1.3l1.2-6.9-5-4.9c-.7-.7-.3-2 .7-2.1l6.9-1 3.1-6.3c.2-.4.6-.7 1.1-.7z" fill="none" stroke="#5f5f64" stroke-width="2.25" stroke-linejoin="round"/></svg></div>
<div class="ic" style="left:1666px;top:36px"><svg width="17" height="11" viewBox="0 0 17 11"><path d="M1.5 2l7 7 7-7" fill="none" stroke="#7a7a7e" stroke-width="1.6" stroke-linecap="round" stroke-linejoin="round"/></svg></div>
<div class="ic" style="left:1703px;top:26px"><svg width="30" height="30" viewBox="0 0 30 30"><path d="M6.3 2.3h16.6c2.6 0 4.2 1.6 4.2 4.2v12c0 2.6-1.6 4.2-4.2 4.2h-7.6l-4.4 4.9c-.5.5-1.3.2-1.3-.5v-4.4h-3.3c-2.6 0-4.2-1.6-4.2-4.2V6.5c0-2.6 1.6-4.2 4.2-4.2z" fill="none" stroke="#5f5f64" stroke-width="2.3" stroke-linejoin="round"/></svg></div>
<div class="ic" style="left:1759px;top:37px"><svg width="28" height="7" viewBox="0 0 28 7"><circle cx="4.3" cy="3.4" r="2.6" fill="#6a6a6e"/><circle cx="13.9" cy="3.4" r="2.6" fill="#6a6a6e"/><circle cx="23.6" cy="3.4" r="2.6" fill="#6a6a6e"/></svg></div>
<div class="ic" style="left:1815px;top:28px"><svg width="26" height="25" viewBox="0 0 26 25"><path d="M15.5 10.2l7.5-7.5M16.5 2.5h6.5v6.5M10.5 14.8L3 22.3M9.5 22.5H3V16" fill="none" stroke="#626267" stroke-width="2.2" stroke-linecap="round" stroke-linejoin="round"/></svg></div>
<div class="ic" style="left:1871px;top:29.5px"><svg width="23" height="22" viewBox="0 0 23 22"><path d="M3.2 2.6l16.6 16.6M19.8 2.6L3.2 19.2" stroke="#626267" stroke-width="2.1" stroke-linecap="round"/></svg></div>
<div class="ic" style="left:1842px;top:251px"><svg width="30" height="26" viewBox="0 0 30 26"><rect x="1.9" y="1.5" width="26.3" height="23" rx="4.5" fill="none" stroke="#b4b4b8" stroke-width="2.1"/><path d="M17.1 1.8v22.5M20.4 7h5M20.4 11.2h5" stroke="#b4b4b8" stroke-width="1.9" stroke-linecap="round"/></svg></div>
<div class="ic" style="left:1842px;top:329px"><svg width="31" height="25" viewBox="0 0 31 25"><path d="M1.8 23.6L8.3 1.6h1.6l6.4 22M4.3 15.4h9.6" fill="none" stroke="#b4b4b8" stroke-width="2.2"/><path d="M18.8 13.1c.9-1.5 2.2-2.4 4-2.4 2.5 0 3.9 1.5 3.9 4v8.9M26.7 17.2c-1.3-.4-2.4-.6-3.6-.6-2.7 0-4.4 1.3-4.4 3.4 0 1.9 1.3 3.2 3.3 3.2 2 0 3.7-1.1 4.7-3" fill="none" stroke="#b4b4b8" stroke-width="2.4"/></svg></div>
<div class="ic" style="left:1846px;top:409px"><svg width="22" height="22" viewBox="0 0 22 22"><path d="M1.9 12.7Q6 8 12.5 2.1M7 1.9h5.7v5.6M19.2 8.1Q15 13 8.6 18.9M8.3 13.2v6h5.5" fill="none" stroke="#b4b4b8" stroke-width="1.8" stroke-linecap="round" stroke-linejoin="round"/></svg></div>
<div class="ic" style="left:1838px;top:480px"><svg width="38" height="36" viewBox="0 0 38 36"><g transform="translate(18.9 17.4) rotate(-42)"><rect x="-13.6" y="-2.9" width="27.2" height="5.8" rx="2.9" fill="none" stroke="#b4b4b8" stroke-width="2.3"/><path d="M7.2 -3v6" stroke="#b4b4b8" stroke-width="2.1"/></g><path d="M9.60 7.80Q10.61 10.39 13.20 11.40Q10.61 12.41 9.60 15.00Q8.59 12.41 6.00 11.40Q8.59 10.39 9.60 7.80ZM16.40 4.90Q17.10 6.70 18.90 7.40Q17.10 8.10 16.40 9.90Q15.70 8.10 13.90 7.40Q15.70 6.70 16.40 4.90ZM26.80 21.30Q28.00 24.40 31.10 25.60Q28.00 26.80 26.80 29.90Q25.60 26.80 22.50 25.60Q25.60 24.40 26.80 21.30Z" fill="#b4b4b8"/></svg></div>
<div class="ic" style="left:1844px;top:562px"><svg width="26" height="26" viewBox="0 0 26 26"><path d="M13 16V2.5M7.5 7.5L13 2l5.5 5.5" fill="none" stroke="#b4b4b8" stroke-width="2" stroke-linecap="round" stroke-linejoin="round"/><path d="M1.5 12v8.5c0 2 1.5 3.5 3.5 3.5h16c2 0 3.5-1.5 3.5-3.5V12" fill="none" stroke="#b4b4b8" stroke-width="2.2" stroke-linecap="round"/></svg></div>
<div class="ic" style="left:1914px;top:84px"><svg width="8" height="7" viewBox="0 0 8 7"><path d="M6 0.5L8 6.5H1z" fill="#bcbbbe"/></svg></div>
<div style="position:absolute;left:1915px;top:96px;width:8px;height:904px;background:#bcbabe;border-radius:4px"></div>
<div style="position:absolute;left:1915px;top:1512px;width:5px;height:3px;background:#bcbabe"></div>
<div class="ic" style="left:537px;top:164px"><svg width="136" height="132" viewBox="0 0 136 132" style="filter:blur(0.5px)"><defs><linearGradient id="bw" x1="0" y1="0" x2="1" y2="0"><stop offset="0" stop-color="#cdcdd0"/><stop offset="0.5" stop-color="#e8e8ea"/><stop offset="1" stop-color="#d2d2d5"/></linearGradient><linearGradient id="win" x1="0" y1="0" x2="0" y2="1"><stop offset="0" stop-color="#34598f"/><stop offset="0.3" stop-color="#5e92cc"/><stop offset="1" stop-color="#4a7dbb"/></linearGradient><linearGradient id="door" x1="0" y1="0" x2="0" y2="1"><stop offset="0" stop-color="#1f3f7c"/><stop offset="0.6" stop-color="#25447e"/><stop offset="0.62" stop-color="#3a3a40"/><stop offset="1" stop-color="#3a3a40"/></linearGradient></defs><rect x="15.0" y="1.0" width="44.0" height="8.0" fill="#b4b4b7"/><rect x="3.0" y="15.0" width="129.0" height="116.0" fill="url(#bw)"/><rect x="0.2" y="7.5" width="134" height="8.5" rx="2.5" fill="#6f6f72"/><rect x="9.1" y="22.4" width="8.0" height="12.5" fill="url(#win)"/><rect x="9.1" y="22.4" width="8.0" height="1.5" fill="#2a3f66"/><rect x="22.8" y="22.4" width="8.0" height="12.5" fill="url(#win)"/><rect x="22.8" y="22.4" width="8.0" height="1.5" fill="#2a3f66"/><rect x="36.0" y="22.4" width="8.0" height="12.5" fill="url(#win)"/><rect x="36.0" y="22.4" width="8.0" height="1.5" fill="#2a3f66"/><rect x="49.8" y="22.4" width="8.0" height="12.5" fill="url(#win)"/><rect x="49.8" y="22.4" width="8.0" height="1.5" fill="#2a3f66"/><rect x="63.0" y="22.4" width="8.0" height="12.5" fill="url(#win)"/><rect x="63.0" y="22.4" width="8.0" height="1.5" fill="#2a3f66"/><rect x="76.2" y="22.4" width="8.0" height="12.5" fill="url(#win)"/><rect x="76.2" y="22.4" width="8.0" height="1.5" fill="#2a3f66"/><rect x="89.4" y="22.4" width="8.0" height="12.5" fill="url(#win)"/><rect x="89.4" y="22.4" width="8.0" height="1.5" fill="#2a3f66"/><rect x="102.6" y="22.4" width="8.0" height="12.5" fill="url(#win)"/><rect x="102.6" y="22.4" width="8.0" height="1.5" fill="#2a3f66"/><rect x="116.3" y="22.4" width="8.0" height="12.5" fill="url(#win)"/><rect x="116.3" y="22.4" width="8.0" height="1.5" fill="#2a3f66"/><rect x="9.1" y="39.9" width="8.0" height="12.5" fill="url(#win)"/><rect x="9.1" y="39.9" width="8.0" height="1.5" fill="#2a3f66"/><rect x="22.8" y="39.9" width="8.0" height="12.5" fill="url(#win)"/><rect x="22.8" y="39.9" width="8.0" height="1.5" fill="#2a3f66"/><rect x="36.0" y="39.9" width="8.0" height="12.5" fill="url(#win)"/><rect x="36.0" y="39.9" width="8.0" height="1.5" fill="#2a3f66"/><rect x="49.8" y="39.9" width="8.0" height="12.5" fill="url(#win)"/><rect x="49.8" y="39.9" width="8.0" height="1.5" fill="#2a3f66"/><rect x="63.0" y="39.9" width="8.0" height="12.5" fill="url(#win)"/><rect x="63.0" y="39.9" width="8.0" height="1.5" fill="#2a3f66"/><rect x="76.2" y="39.9" width="8.0" height="12.5" fill="url(#win)"/><rect x="76.2" y="39.9" width="8.0" height="1.5" fill="#2a3f66"/><rect x="89.4" y="39.9" width="8.0" height="12.5" fill="url(#win)"/><rect x="89.4" y="39.9" width="8.0" height="1.5" fill="#2a3f66"/><rect x="102.6" y="39.9" width="8.0" height="12.5" fill="url(#win)"/><rect x="102.6" y="39.9" width="8.0" height="1.5" fill="#2a3f66"/><rect x="116.3" y="39.9" width="8.0" height="12.5" fill="url(#win)"/><rect x="116.3" y="39.9" width="8.0" height="1.5" fill="#2a3f66"/><rect x="9.1" y="56.7" width="8.0" height="12.5" fill="url(#win)"/><rect x="9.1" y="56.7" width="8.0" height="1.5" fill="#2a3f66"/><rect x="22.8" y="56.7" width="8.0" height="12.5" fill="url(#win)"/><rect x="22.8" y="56.7" width="8.0" height="1.5" fill="#2a3f66"/><rect x="36.0" y="56.7" width="8.0" height="12.5" fill="url(#win)"/><rect x="36.0" y="56.7" width="8.0" height="1.5" fill="#2a3f66"/><rect x="49.8" y="56.7" width="8.0" height="12.5" fill="url(#win)"/><rect x="49.8" y="56.7" width="8.0" height="1.5" fill="#2a3f66"/><rect x="63.0" y="56.7" width="8.0" height="12.5" fill="url(#win)"/><rect x="63.0" y="56.7" width="8.0" height="1.5" fill="#2a3f66"/><rect x="76.2" y="56.7" width="8.0" height="12.5" fill="url(#win)"/><rect x="76.2" y="56.7" width="8.0" height="1.5" fill="#2a3f66"/><rect x="89.4" y="56.7" width="8.0" height="12.5" fill="url(#win)"/><rect x="89.4" y="56.7" width="8.0" height="1.5" fill="#2a3f66"/><rect x="102.6" y="56.7" width="8.0" height="12.5" fill="url(#win)"/><rect x="102.6" y="56.7" width="8.0" height="1.5" fill="#2a3f66"/><rect x="116.3" y="56.7" width="8.0" height="12.5" fill="url(#win)"/><rect x="116.3" y="56.7" width="8.0" height="1.5" fill="#2a3f66"/><rect x="9.1" y="74.2" width="8.0" height="12.5" fill="url(#win)"/><rect x="9.1" y="74.2" width="8.0" height="1.5" fill="#2a3f66"/><rect x="22.8" y="74.2" width="8.0" height="12.5" fill="url(#win)"/><rect x="22.8" y="74.2" width="8.0" height="1.5" fill="#2a3f66"/><rect x="36.0" y="74.2" width="8.0" height="12.5" fill="url(#win)"/><rect x="36.0" y="74.2" width="8.0" height="1.5" fill="#2a3f66"/><rect x="49.8" y="74.2" width="8.0" height="12.5" fill="url(#win)"/><rect x="49.8" y="74.2" width="8.0" height="1.5" fill="#2a3f66"/><rect x="63.0" y="74.2" width="8.0" height="12.5" fill="url(#win)"/><rect x="63.0" y="74.2" width="8.0" height="1.5" fill="#2a3f66"/><rect x="76.2" y="74.2" width="8.0" height="12.5" fill="url(#win)"/><rect x="76.2" y="74.2" width="8.0" height="1.5" fill="#2a3f66"/><rect x="89.4" y="74.2" width="8.0" height="12.5" fill="url(#win)"/><rect x="89.4" y="74.2" width="8.0" height="1.5" fill="#2a3f66"/><rect x="102.6" y="74.2" width="8.0" height="12.5" fill="url(#win)"/><rect x="102.6" y="74.2" width="8.0" height="1.5" fill="#2a3f66"/><rect x="116.3" y="74.2" width="8.0" height="12.5" fill="url(#win)"/><rect x="116.3" y="74.2" width="8.0" height="1.5" fill="#2a3f66"/><rect x="9.1" y="91.6" width="8.0" height="12.5" fill="url(#win)"/><rect x="9.1" y="91.6" width="8.0" height="1.5" fill="#2a3f66"/><rect x="22.8" y="91.6" width="8.0" height="12.5" fill="url(#win)"/><rect x="22.8" y="91.6" width="8.0" height="1.5" fill="#2a3f66"/><rect x="102.6" y="91.6" width="8.0" height="12.5" fill="url(#win)"/><rect x="102.6" y="91.6" width="8.0" height="1.5" fill="#2a3f66"/><rect x="116.3" y="91.6" width="8.0" height="12.5" fill="url(#win)"/><rect x="116.3" y="91.6" width="8.0" height="1.5" fill="#2a3f66"/><rect x="9.1" y="108.5" width="8.0" height="11.5" fill="#2d3a52"/><rect x="9.1" y="108.5" width="8.0" height="1.5" fill="#2a3f66"/><rect x="22.8" y="108.5" width="8.0" height="11.5" fill="#2d3a52"/><rect x="22.8" y="108.5" width="8.0" height="1.5" fill="#2a3f66"/><rect x="102.6" y="108.5" width="8.0" height="11.5" fill="#2d3a52"/><rect x="102.6" y="108.5" width="8.0" height="1.5" fill="#2a3f66"/><rect x="116.3" y="108.5" width="8.0" height="11.5" fill="#2d3a52"/><rect x="116.3" y="108.5" width="8.0" height="1.5" fill="#2a3f66"/><rect x="38.0" y="92.0" width="60.5" height="7.5" fill="#747477"/><rect x="44.0" y="100.5" width="11.5" height="28.0" fill="url(#door)"/><rect x="60.5" y="100.5" width="12.0" height="28.0" fill="url(#door)"/><rect x="77.5" y="100.5" width="12.0" height="28.0" fill="url(#door)"/></svg></div>
<div class="ic" style="left:535px;top:323px"><svg width="22" height="22" viewBox="0 0 22 22"><path d="M1.9 12.7Q6 8 12.5 2.1M7 1.9h5.7v5.6M19.2 8.1Q15 13 8.6 18.9M8.3 13.2v6h5.5" fill="none" stroke="#7f7f84" stroke-width="1.8" stroke-linecap="round" stroke-linejoin="round"/></svg></div>
<div class="ic" style="left:533.0px;top:447.0px"><svg width="33.0" height="33.0" viewBox="0 0 40 40"><defs><linearGradient id="av549_463" x1="0.15" y1="0.1" x2="0.85" y2="0.9"><stop offset="0" stop-color="#7476f3"/><stop offset="0.55" stop-color="#5a94f6"/><stop offset="1" stop-color="#3fb0f8"/></linearGradient></defs><circle cx="20" cy="20" r="20" fill="url(#av549_463)"/><path d="M10.1 9.4H14.2V24.7A5.45 5.45 0 0 0 25.1 24.7V9.6H22.3L27.6 5.2L33.0 9.6H29.9V24.7A9.9 9.9 0 0 1 10.1 24.7Z" fill="none" stroke="#fff" stroke-width="2.1" stroke-linejoin="miter"/></svg></div>
<div style="position:absolute;left:533px;top:593.5px;width:1150px;height:1.6px;background:#efedf1"></div>
<div style="position:absolute;left:533px;top:671.3px;width:1150px;height:1.6px;background:#efedf1"></div>
<div style="position:absolute;left:553px;top:607.2px;width:52px;height:52px;background:#f0eff2;border-radius:11px"></div>
<div class="ic" style="left:569.0px;top:621.2px;transform:scale(1.000);transform-origin:0 0"><svg class="doc" width="20" height="23" viewBox="0 0 20 23"><path d="M5 1.2h6.3c.8 0 1.3.2 1.9.8l4 4c.6.6.8 1.1.8 1.9V17.8c0 2.2-1.6 3.9-3.9 3.9H5c-2.2 0-3.9-1.6-3.9-3.9V5c0-2.2 1.6-3.8 3.9-3.8z" fill="none" stroke="#6f6f74" stroke-width="1.9"/><path d="M12.6 1.4v2.8c0 1.5 1 2.6 2.6 2.6H18" fill="none" stroke="#6f6f74" stroke-width="1.6"/><path d="M5.2 9.6h4.4M5.2 13.1h9.4M5.2 16.5h9.4" stroke="#6f6f74" stroke-width="1.9" stroke-linecap="round"/></svg></div>
<div class="ic" style="left:1374.5px;top:612.7px"><svg width="41.0" height="41.0" viewBox="0 0 40 40"><defs><linearGradient id="av1395_633" x1="0.15" y1="0.1" x2="0.85" y2="0.9"><stop offset="0" stop-color="#7476f3"/><stop offset="0.55" stop-color="#5a94f6"/><stop offset="1" stop-color="#3fb0f8"/></linearGradient></defs><circle cx="20" cy="20" r="20" fill="url(#av1395_633)"/><path d="M10.1 9.4H14.2V24.7A5.45 5.45 0 0 0 25.1 24.7V9.6H22.3L27.6 5.2L33.0 9.6H29.9V24.7A9.9 9.9 0 0 1 10.1 24.7Z" fill="none" stroke="#fff" stroke-width="2.1" stroke-linejoin="miter"/></svg></div>
<div class="ic" style="left:1540px;top:620.2px"><svg width="22" height="24" viewBox="0 0 22 24"><path d="M11 1.5c3.2 0 5.4 2.5 5.4 5.8 0 2.6-1.2 4.7-3 5.9 3.9.9 6.6 3.6 6.6 6.6 0 1.6-1 2.6-2.6 2.6H4.6C3 22.4 2 21.4 2 19.8c0-3 2.7-5.7 6.6-6.6-1.8-1.2-3-3.3-3-5.9 0-3.3 2.2-5.8 5.4-5.8z" fill="none" stroke="#6f6f74" stroke-width="1.8" stroke-linejoin="round"/></svg></div>
<div style="position:absolute;left:533px;top:749.1px;width:1150px;height:1.6px;background:#efedf1"></div>
<div style="position:absolute;left:553px;top:685.0px;width:52px;height:52px;background:#f0eff2;border-radius:11px"></div>
<div class="ic" style="left:569.0px;top:699.0px;transform:scale(1.000);transform-origin:0 0"><svg class="doc" width="20" height="23" viewBox="0 0 20 23"><path d="M5 1.2h6.3c.8 0 1.3.2 1.9.8l4 4c.6.6.8 1.1.8 1.9V17.8c0 2.2-1.6 3.9-3.9 3.9H5c-2.2 0-3.9-1.6-3.9-3.9V5c0-2.2 1.6-3.8 3.9-3.8z" fill="none" stroke="#6f6f74" stroke-width="1.9"/><path d="M12.6 1.4v2.8c0 1.5 1 2.6 2.6 2.6H18" fill="none" stroke="#6f6f74" stroke-width="1.6"/><path d="M5.2 9.6h4.4M5.2 13.1h9.4M5.2 16.5h9.4" stroke="#6f6f74" stroke-width="1.9" stroke-linecap="round"/></svg></div>
<div class="ic" style="left:1374.5px;top:690.5px"><svg width="41.0" height="41.0" viewBox="0 0 40 40"><defs><linearGradient id="av1395_710" x1="0.15" y1="0.1" x2="0.85" y2="0.9"><stop offset="0" stop-color="#7476f3"/><stop offset="0.55" stop-color="#5a94f6"/><stop offset="1" stop-color="#3fb0f8"/></linearGradient></defs><circle cx="20" cy="20" r="20" fill="url(#av1395_710)"/><path d="M10.1 9.4H14.2V24.7A5.45 5.45 0 0 0 25.1 24.7V9.6H22.3L27.6 5.2L33.0 9.6H29.9V24.7A9.9 9.9 0 0 1 10.1 24.7Z" fill="none" stroke="#fff" stroke-width="2.1" stroke-linejoin="miter"/></svg></div>
<div class="ic" style="left:1540px;top:698.0px"><svg width="22" height="24" viewBox="0 0 22 24"><path d="M11 1.5c3.2 0 5.4 2.5 5.4 5.8 0 2.6-1.2 4.7-3 5.9 3.9.9 6.6 3.6 6.6 6.6 0 1.6-1 2.6-2.6 2.6H4.6C3 22.4 2 21.4 2 19.8c0-3 2.7-5.7 6.6-6.6-1.8-1.2-3-3.3-3-5.9 0-3.3 2.2-5.8 5.4-5.8z" fill="none" stroke="#6f6f74" stroke-width="1.8" stroke-linejoin="round"/></svg></div>
<div style="position:absolute;left:533px;top:826.9px;width:1150px;height:1.6px;background:#efedf1"></div>
<div style="position:absolute;left:553px;top:762.8px;width:52px;height:52px;background:#f0eff2;border-radius:11px"></div>
<div class="ic" style="left:569.0px;top:776.8px;transform:scale(1.000);transform-origin:0 0"><svg class="doc" width="20" height="23" viewBox="0 0 20 23"><path d="M5 1.2h6.3c.8 0 1.3.2 1.9.8l4 4c.6.6.8 1.1.8 1.9V17.8c0 2.2-1.6 3.9-3.9 3.9H5c-2.2 0-3.9-1.6-3.9-3.9V5c0-2.2 1.6-3.8 3.9-3.8z" fill="none" stroke="#6f6f74" stroke-width="1.9"/><path d="M12.6 1.4v2.8c0 1.5 1 2.6 2.6 2.6H18" fill="none" stroke="#6f6f74" stroke-width="1.6"/><path d="M5.2 9.6h4.4M5.2 13.1h9.4M5.2 16.5h9.4" stroke="#6f6f74" stroke-width="1.9" stroke-linecap="round"/></svg></div>
<div class="ic" style="left:1374.5px;top:768.3px"><svg width="41.0" height="41.0" viewBox="0 0 40 40"><defs><linearGradient id="av1395_788" x1="0.15" y1="0.1" x2="0.85" y2="0.9"><stop offset="0" stop-color="#7476f3"/><stop offset="0.55" stop-color="#5a94f6"/><stop offset="1" stop-color="#3fb0f8"/></linearGradient></defs><circle cx="20" cy="20" r="20" fill="url(#av1395_788)"/><path d="M10.1 9.4H14.2V24.7A5.45 5.45 0 0 0 25.1 24.7V9.6H22.3L27.6 5.2L33.0 9.6H29.9V24.7A9.9 9.9 0 0 1 10.1 24.7Z" fill="none" stroke="#fff" stroke-width="2.1" stroke-linejoin="miter"/></svg></div>
<div class="ic" style="left:1540px;top:775.8px"><svg width="22" height="24" viewBox="0 0 22 24"><path d="M11 1.5c3.2 0 5.4 2.5 5.4 5.8 0 2.6-1.2 4.7-3 5.9 3.9.9 6.6 3.6 6.6 6.6 0 1.6-1 2.6-2.6 2.6H4.6C3 22.4 2 21.4 2 19.8c0-3 2.7-5.7 6.6-6.6-1.8-1.2-3-3.3-3-5.9 0-3.3 2.2-5.8 5.4-5.8z" fill="none" stroke="#6f6f74" stroke-width="1.8" stroke-linejoin="round"/></svg></div>
<div style="position:absolute;left:533px;top:904.7px;width:1150px;height:1.6px;background:#efedf1"></div>
<div style="position:absolute;left:553px;top:840.6px;width:52px;height:52px;background:#f0eff2;border-radius:11px"></div>
<div class="ic" style="left:569.0px;top:854.6px;transform:scale(1.000);transform-origin:0 0"><svg class="doc" width="20" height="23" viewBox="0 0 20 23"><path d="M5 1.2h6.3c.8 0 1.3.2 1.9.8l4 4c.6.6.8 1.1.8 1.9V17.8c0 2.2-1.6 3.9-3.9 3.9H5c-2.2 0-3.9-1.6-3.9-3.9V5c0-2.2 1.6-3.8 3.9-3.8z" fill="none" stroke="#6f6f74" stroke-width="1.9"/><path d="M12.6 1.4v2.8c0 1.5 1 2.6 2.6 2.6H18" fill="none" stroke="#6f6f74" stroke-width="1.6"/><path d="M5.2 9.6h4.4M5.2 13.1h9.4M5.2 16.5h9.4" stroke="#6f6f74" stroke-width="1.9" stroke-linecap="round"/></svg></div>
<div class="ic" style="left:1374.5px;top:846.1px"><svg width="41.0" height="41.0" viewBox="0 0 40 40"><defs><linearGradient id="av1395_866" x1="0.15" y1="0.1" x2="0.85" y2="0.9"><stop offset="0" stop-color="#7476f3"/><stop offset="0.55" stop-color="#5a94f6"/><stop offset="1" stop-color="#3fb0f8"/></linearGradient></defs><circle cx="20" cy="20" r="20" fill="url(#av1395_866)"/><path d="M10.1 9.4H14.2V24.7A5.45 5.45 0 0 0 25.1 24.7V9.6H22.3L27.6 5.2L33.0 9.6H29.9V24.7A9.9 9.9 0 0 1 10.1 24.7Z" fill="none" stroke="#fff" stroke-width="2.1" stroke-linejoin="miter"/></svg></div>
<div class="ic" style="left:1540px;top:853.6px"><svg width="22" height="24" viewBox="0 0 22 24"><path d="M11 1.5c3.2 0 5.4 2.5 5.4 5.8 0 2.6-1.2 4.7-3 5.9 3.9.9 6.6 3.6 6.6 6.6 0 1.6-1 2.6-2.6 2.6H4.6C3 22.4 2 21.4 2 19.8c0-3 2.7-5.7 6.6-6.6-1.8-1.2-3-3.3-3-5.9 0-3.3 2.2-5.8 5.4-5.8z" fill="none" stroke="#6f6f74" stroke-width="1.8" stroke-linejoin="round"/></svg></div>
<div style="position:absolute;left:533px;top:982.5px;width:1150px;height:1.6px;background:#efedf1"></div>
<div style="position:absolute;left:553px;top:918.4px;width:52px;height:52px;background:#f0eff2;border-radius:11px"></div>
<div class="ic" style="left:569.0px;top:932.4px;transform:scale(1.000);transform-origin:0 0"><svg class="doc" width="20" height="23" viewBox="0 0 20 23"><path d="M5 1.2h6.3c.8 0 1.3.2 1.9.8l4 4c.6.6.8 1.1.8 1.9V17.8c0 2.2-1.6 3.9-3.9 3.9H5c-2.2 0-3.9-1.6-3.9-3.9V5c0-2.2 1.6-3.8 3.9-3.8z" fill="none" stroke="#6f6f74" stroke-width="1.9"/><path d="M12.6 1.4v2.8c0 1.5 1 2.6 2.6 2.6H18" fill="none" stroke="#6f6f74" stroke-width="1.6"/><path d="M5.2 9.6h4.4M5.2 13.1h9.4M5.2 16.5h9.4" stroke="#6f6f74" stroke-width="1.9" stroke-linecap="round"/></svg></div>
<div class="ic" style="left:1374.5px;top:923.9px"><svg width="41.0" height="41.0" viewBox="0 0 40 40"><defs><linearGradient id="av1395_944" x1="0.15" y1="0.1" x2="0.85" y2="0.9"><stop offset="0" stop-color="#7476f3"/><stop offset="0.55" stop-color="#5a94f6"/><stop offset="1" stop-color="#3fb0f8"/></linearGradient></defs><circle cx="20" cy="20" r="20" fill="url(#av1395_944)"/><path d="M10.1 9.4H14.2V24.7A5.45 5.45 0 0 0 25.1 24.7V9.6H22.3L27.6 5.2L33.0 9.6H29.9V24.7A9.9 9.9 0 0 1 10.1 24.7Z" fill="none" stroke="#fff" stroke-width="2.1" stroke-linejoin="miter"/></svg></div>
<div class="ic" style="left:1540px;top:931.4px"><svg width="22" height="24" viewBox="0 0 22 24"><path d="M11 1.5c3.2 0 5.4 2.5 5.4 5.8 0 2.6-1.2 4.7-3 5.9 3.9.9 6.6 3.6 6.6 6.6 0 1.6-1 2.6-2.6 2.6H4.6C3 22.4 2 21.4 2 19.8c0-3 2.7-5.7 6.6-6.6-1.8-1.2-3-3.3-3-5.9 0-3.3 2.2-5.8 5.4-5.8z" fill="none" stroke="#6f6f74" stroke-width="1.8" stroke-linejoin="round"/></svg></div>
<div style="position:absolute;left:533px;top:1060.3px;width:1150px;height:1.6px;background:#efedf1"></div>
<div style="position:absolute;left:553px;top:996.2px;width:52px;height:52px;background:#f0eff2;border-radius:11px"></div>
<div class="ic" style="left:569.0px;top:1010.2px;transform:scale(1.000);transform-origin:0 0"><svg class="doc" width="20" height="23" viewBox="0 0 20 23"><path d="M5 1.2h6.3c.8 0 1.3.2 1.9.8l4 4c.6.6.8 1.1.8 1.9V17.8c0 2.2-1.6 3.9-3.9 3.9H5c-2.2 0-3.9-1.6-3.9-3.9V5c0-2.2 1.6-3.8 3.9-3.8z" fill="none" stroke="#6f6f74" stroke-width="1.9"/><path d="M12.6 1.4v2.8c0 1.5 1 2.6 2.6 2.6H18" fill="none" stroke="#6f6f74" stroke-width="1.6"/><path d="M5.2 9.6h4.4M5.2 13.1h9.4M5.2 16.5h9.4" stroke="#6f6f74" stroke-width="1.9" stroke-linecap="round"/></svg></div>
<div class="ic" style="left:1374.5px;top:1001.7px"><svg width="41.0" height="41.0" viewBox="0 0 40 40"><defs><linearGradient id="av1395_1022" x1="0.15" y1="0.1" x2="0.85" y2="0.9"><stop offset="0" stop-color="#7476f3"/><stop offset="0.55" stop-color="#5a94f6"/><stop offset="1" stop-color="#3fb0f8"/></linearGradient></defs><circle cx="20" cy="20" r="20" fill="url(#av1395_1022)"/><path d="M10.1 9.4H14.2V24.7A5.45 5.45 0 0 0 25.1 24.7V9.6H22.3L27.6 5.2L33.0 9.6H29.9V24.7A9.9 9.9 0 0 1 10.1 24.7Z" fill="none" stroke="#fff" stroke-width="2.1" stroke-linejoin="miter"/></svg></div>
<div class="ic" style="left:1540px;top:1009.2px"><svg width="22" height="24" viewBox="0 0 22 24"><path d="M11 1.5c3.2 0 5.4 2.5 5.4 5.8 0 2.6-1.2 4.7-3 5.9 3.9.9 6.6 3.6 6.6 6.6 0 1.6-1 2.6-2.6 2.6H4.6C3 22.4 2 21.4 2 19.8c0-3 2.7-5.7 6.6-6.6-1.8-1.2-3-3.3-3-5.9 0-3.3 2.2-5.8 5.4-5.8z" fill="none" stroke="#6f6f74" stroke-width="1.8" stroke-linejoin="round"/></svg></div>
<div style="position:absolute;left:533px;top:1138.1px;width:1150px;height:1.6px;background:#efedf1"></div>
<div style="position:absolute;left:553px;top:1074.0px;width:52px;height:52px;background:#f0eff2;border-radius:11px"></div>
<div class="ic" style="left:569.0px;top:1088.0px;transform:scale(1.000);transform-origin:0 0"><svg class="doc" width="20" height="23" viewBox="0 0 20 23"><path d="M5 1.2h6.3c.8 0 1.3.2 1.9.8l4 4c.6.6.8 1.1.8 1.9V17.8c0 2.2-1.6 3.9-3.9 3.9H5c-2.2 0-3.9-1.6-3.9-3.9V5c0-2.2 1.6-3.8 3.9-3.8z" fill="none" stroke="#6f6f74" stroke-width="1.9"/><path d="M12.6 1.4v2.8c0 1.5 1 2.6 2.6 2.6H18" fill="none" stroke="#6f6f74" stroke-width="1.6"/><path d="M5.2 9.6h4.4M5.2 13.1h9.4M5.2 16.5h9.4" stroke="#6f6f74" stroke-width="1.9" stroke-linecap="round"/></svg></div>
<div class="ic" style="left:1374.5px;top:1079.5px"><svg width="41.0" height="41.0" viewBox="0 0 40 40"><defs><linearGradient id="av1395_1100" x1="0.15" y1="0.1" x2="0.85" y2="0.9"><stop offset="0" stop-color="#7476f3"/><stop offset="0.55" stop-color="#5a94f6"/><stop offset="1" stop-color="#3fb0f8"/></linearGradient></defs><circle cx="20" cy="20" r="20" fill="url(#av1395_1100)"/><path d="M10.1 9.4H14.2V24.7A5.45 5.45 0 0 0 25.1 24.7V9.6H22.3L27.6 5.2L33.0 9.6H29.9V24.7A9.9 9.9 0 0 1 10.1 24.7Z" fill="none" stroke="#fff" stroke-width="2.1" stroke-linejoin="miter"/></svg></div>
<div class="ic" style="left:1540px;top:1087.0px"><svg width="22" height="24" viewBox="0 0 22 24"><path d="M11 1.5c3.2 0 5.4 2.5 5.4 5.8 0 2.6-1.2 4.7-3 5.9 3.9.9 6.6 3.6 6.6 6.6 0 1.6-1 2.6-2.6 2.6H4.6C3 22.4 2 21.4 2 19.8c0-3 2.7-5.7 6.6-6.6-1.8-1.2-3-3.3-3-5.9 0-3.3 2.2-5.8 5.4-5.8z" fill="none" stroke="#6f6f74" stroke-width="1.8" stroke-linejoin="round"/></svg></div>
<div style="position:absolute;left:533px;top:1215.9px;width:1150px;height:1.6px;background:#efedf1"></div>
<div style="position:absolute;left:553px;top:1151.8px;width:52px;height:52px;background:#f0eff2;border-radius:11px"></div>
<div class="ic" style="left:569.0px;top:1165.8px;transform:scale(1.000);transform-origin:0 0"><svg class="doc" width="20" height="23" viewBox="0 0 20 23"><path d="M5 1.2h6.3c.8 0 1.3.2 1.9.8l4 4c.6.6.8 1.1.8 1.9V17.8c0 2.2-1.6 3.9-3.9 3.9H5c-2.2 0-3.9-1.6-3.9-3.9V5c0-2.2 1.6-3.8 3.9-3.8z" fill="none" stroke="#6f6f74" stroke-width="1.9"/><path d="M12.6 1.4v2.8c0 1.5 1 2.6 2.6 2.6H18" fill="none" stroke="#6f6f74" stroke-width="1.6"/><path d="M5.2 9.6h4.4M5.2 13.1h9.4M5.2 16.5h9.4" stroke="#6f6f74" stroke-width="1.9" stroke-linecap="round"/></svg></div>
<div class="ic" style="left:1374.5px;top:1157.3px"><svg width="41.0" height="41.0" viewBox="0 0 40 40"><defs><linearGradient id="av1395_1177" x1="0.15" y1="0.1" x2="0.85" y2="0.9"><stop offset="0" stop-color="#7476f3"/><stop offset="0.55" stop-color="#5a94f6"/><stop offset="1" stop-color="#3fb0f8"/></linearGradient></defs><circle cx="20" cy="20" r="20" fill="url(#av1395_1177)"/><path d="M10.1 9.4H14.2V24.7A5.45 5.45 0 0 0 25.1 24.7V9.6H22.3L27.6 5.2L33.0 9.6H29.9V24.7A9.9 9.9 0 0 1 10.1 24.7Z" fill="none" stroke="#fff" stroke-width="2.1" stroke-linejoin="miter"/></svg></div>
<div class="ic" style="left:1540px;top:1164.8px"><svg width="22" height="24" viewBox="0 0 22 24"><path d="M11 1.5c3.2 0 5.4 2.5 5.4 5.8 0 2.6-1.2 4.7-3 5.9 3.9.9 6.6 3.6 6.6 6.6 0 1.6-1 2.6-2.6 2.6H4.6C3 22.4 2 21.4 2 19.8c0-3 2.7-5.7 6.6-6.6-1.8-1.2-3-3.3-3-5.9 0-3.3 2.2-5.8 5.4-5.8z" fill="none" stroke="#6f6f74" stroke-width="1.8" stroke-linejoin="round"/></svg></div>
<div style="position:absolute;left:533px;top:1293.7px;width:1150px;height:1.6px;background:#efedf1"></div>
<div style="position:absolute;left:553px;top:1229.6px;width:52px;height:52px;background:#f0eff2;border-radius:11px"></div>
<div class="ic" style="left:569.0px;top:1243.6px;transform:scale(1.000);transform-origin:0 0"><svg class="doc" width="20" height="23" viewBox="0 0 20 23"><path d="M5 1.2h6.3c.8 0 1.3.2 1.9.8l4 4c.6.6.8 1.1.8 1.9V17.8c0 2.2-1.6 3.9-3.9 3.9H5c-2.2 0-3.9-1.6-3.9-3.9V5c0-2.2 1.6-3.8 3.9-3.8z" fill="none" stroke="#6f6f74" stroke-width="1.9"/><path d="M12.6 1.4v2.8c0 1.5 1 2.6 2.6 2.6H18" fill="none" stroke="#6f6f74" stroke-width="1.6"/><path d="M5.2 9.6h4.4M5.2 13.1h9.4M5.2 16.5h9.4" stroke="#6f6f74" stroke-width="1.9" stroke-linecap="round"/></svg></div>
<div class="ic" style="left:1374.5px;top:1235.1px"><svg width="41.0" height="41.0" viewBox="0 0 40 40"><defs><linearGradient id="av1395_1255" x1="0.15" y1="0.1" x2="0.85" y2="0.9"><stop offset="0" stop-color="#7476f3"/><stop offset="0.55" stop-color="#5a94f6"/><stop offset="1" stop-color="#3fb0f8"/></linearGradient></defs><circle cx="20" cy="20" r="20" fill="url(#av1395_1255)"/><path d="M10.1 9.4H14.2V24.7A5.45 5.45 0 0 0 25.1 24.7V9.6H22.3L27.6 5.2L33.0 9.6H29.9V24.7A9.9 9.9 0 0 1 10.1 24.7Z" fill="none" stroke="#fff" stroke-width="2.1" stroke-linejoin="miter"/></svg></div>
<div class="ic" style="left:1540px;top:1242.6px"><svg width="22" height="24" viewBox="0 0 22 24"><path d="M11 1.5c3.2 0 5.4 2.5 5.4 5.8 0 2.6-1.2 4.7-3 5.9 3.9.9 6.6 3.6 6.6 6.6 0 1.6-1 2.6-2.6 2.6H4.6C3 22.4 2 21.4 2 19.8c0-3 2.7-5.7 6.6-6.6-1.8-1.2-3-3.3-3-5.9 0-3.3 2.2-5.8 5.4-5.8z" fill="none" stroke="#6f6f74" stroke-width="1.8" stroke-linejoin="round"/></svg></div>
<div style="position:absolute;left:533px;top:1371.5px;width:1150px;height:1.6px;background:#efedf1"></div>
<div style="position:absolute;left:553px;top:1307.4px;width:52px;height:52px;background:#f0eff2;border-radius:11px"></div>
<div class="ic" style="left:569.0px;top:1321.4px;transform:scale(1.000);transform-origin:0 0"><svg class="doc" width="20" height="23" viewBox="0 0 20 23"><path d="M5 1.2h6.3c.8 0 1.3.2 1.9.8l4 4c.6.6.8 1.1.8 1.9V17.8c0 2.2-1.6 3.9-3.9 3.9H5c-2.2 0-3.9-1.6-3.9-3.9V5c0-2.2 1.6-3.8 3.9-3.8z" fill="none" stroke="#6f6f74" stroke-width="1.9"/><path d="M12.6 1.4v2.8c0 1.5 1 2.6 2.6 2.6H18" fill="none" stroke="#6f6f74" stroke-width="1.6"/><path d="M5.2 9.6h4.4M5.2 13.1h9.4M5.2 16.5h9.4" stroke="#6f6f74" stroke-width="1.9" stroke-linecap="round"/></svg></div>
<div class="ic" style="left:1374.5px;top:1312.9px"><svg width="41.0" height="41.0" viewBox="0 0 40 40"><defs><linearGradient id="av1395_1333" x1="0.15" y1="0.1" x2="0.85" y2="0.9"><stop offset="0" stop-color="#7476f3"/><stop offset="0.55" stop-color="#5a94f6"/><stop offset="1" stop-color="#3fb0f8"/></linearGradient></defs><circle cx="20" cy="20" r="20" fill="url(#av1395_1333)"/><path d="M10.1 9.4H14.2V24.7A5.45 5.45 0 0 0 25.1 24.7V9.6H22.3L27.6 5.2L33.0 9.6H29.9V24.7A9.9 9.9 0 0 1 10.1 24.7Z" fill="none" stroke="#fff" stroke-width="2.1" stroke-linejoin="miter"/></svg></div>
<div class="ic" style="left:1540px;top:1320.4px"><svg width="22" height="24" viewBox="0 0 22 24"><path d="M11 1.5c3.2 0 5.4 2.5 5.4 5.8 0 2.6-1.2 4.7-3 5.9 3.9.9 6.6 3.6 6.6 6.6 0 1.6-1 2.6-2.6 2.6H4.6C3 22.4 2 21.4 2 19.8c0-3 2.7-5.7 6.6-6.6-1.8-1.2-3-3.3-3-5.9 0-3.3 2.2-5.8 5.4-5.8z" fill="none" stroke="#6f6f74" stroke-width="1.8" stroke-linejoin="round"/></svg></div>
<div style="position:absolute;left:533px;top:1449.3px;width:1150px;height:1.6px;background:#efedf1"></div>
<div style="position:absolute;left:553px;top:1385.2px;width:52px;height:52px;background:#f0eff2;border-radius:11px"></div>
<div class="ic" style="left:569.0px;top:1399.2px;transform:scale(1.000);transform-origin:0 0"><svg class="doc" width="20" height="23" viewBox="0 0 20 23"><path d="M5 1.2h6.3c.8 0 1.3.2 1.9.8l4 4c.6.6.8 1.1.8 1.9V17.8c0 2.2-1.6 3.9-3.9 3.9H5c-2.2 0-3.9-1.6-3.9-3.9V5c0-2.2 1.6-3.8 3.9-3.8z" fill="none" stroke="#6f6f74" stroke-width="1.9"/><path d="M12.6 1.4v2.8c0 1.5 1 2.6 2.6 2.6H18" fill="none" stroke="#6f6f74" stroke-width="1.6"/><path d="M5.2 9.6h4.4M5.2 13.1h9.4M5.2 16.5h9.4" stroke="#6f6f74" stroke-width="1.9" stroke-linecap="round"/></svg></div>
<div class="ic" style="left:1374.5px;top:1390.7px"><svg width="41.0" height="41.0" viewBox="0 0 40 40"><defs><linearGradient id="av1395_1411" x1="0.15" y1="0.1" x2="0.85" y2="0.9"><stop offset="0" stop-color="#7476f3"/><stop offset="0.55" stop-color="#5a94f6"/><stop offset="1" stop-color="#3fb0f8"/></linearGradient></defs><circle cx="20" cy="20" r="20" fill="url(#av1395_1411)"/><path d="M10.1 9.4H14.2V24.7A5.45 5.45 0 0 0 25.1 24.7V9.6H22.3L27.6 5.2L33.0 9.6H29.9V24.7A9.9 9.9 0 0 1 10.1 24.7Z" fill="none" stroke="#fff" stroke-width="2.1" stroke-linejoin="miter"/></svg></div>
<div class="ic" style="left:1540px;top:1398.2px"><svg width="22" height="24" viewBox="0 0 22 24"><path d="M11 1.5c3.2 0 5.4 2.5 5.4 5.8 0 2.6-1.2 4.7-3 5.9 3.9.9 6.6 3.6 6.6 6.6 0 1.6-1 2.6-2.6 2.6H4.6C3 22.4 2 21.4 2 19.8c0-3 2.7-5.7 6.6-6.6-1.8-1.2-3-3.3-3-5.9 0-3.3 2.2-5.8 5.4-5.8z" fill="none" stroke="#6f6f74" stroke-width="1.8" stroke-linejoin="round"/></svg></div>
<div style="position:absolute;left:533px;top:1527.1px;width:1150px;height:1.6px;background:#efedf1"></div>
<div style="position:absolute;left:553px;top:1463.0px;width:52px;height:52px;background:#f0eff2;border-radius:11px"></div>
<div class="ic" style="left:569.0px;top:1477.0px;transform:scale(1.000);transform-origin:0 0"><svg class="doc" width="20" height="23" viewBox="0 0 20 23"><path d="M5 1.2h6.3c.8 0 1.3.2 1.9.8l4 4c.6.6.8 1.1.8 1.9V17.8c0 2.2-1.6 3.9-3.9 3.9H5c-2.2 0-3.9-1.6-3.9-3.9V5c0-2.2 1.6-3.8 3.9-3.8z" fill="none" stroke="#6f6f74" stroke-width="1.9"/><path d="M12.6 1.4v2.8c0 1.5 1 2.6 2.6 2.6H18" fill="none" stroke="#6f6f74" stroke-width="1.6"/><path d="M5.2 9.6h4.4M5.2 13.1h9.4M5.2 16.5h9.4" stroke="#6f6f74" stroke-width="1.9" stroke-linecap="round"/></svg></div>
<div class="ic" style="left:1374.5px;top:1468.5px"><svg width="41.0" height="41.0" viewBox="0 0 40 40"><defs><linearGradient id="av1395_1489" x1="0.15" y1="0.1" x2="0.85" y2="0.9"><stop offset="0" stop-color="#7476f3"/><stop offset="0.55" stop-color="#5a94f6"/><stop offset="1" stop-color="#3fb0f8"/></linearGradient></defs><circle cx="20" cy="20" r="20" fill="url(#av1395_1489)"/><path d="M10.1 9.4H14.2V24.7A5.45 5.45 0 0 0 25.1 24.7V9.6H22.3L27.6 5.2L33.0 9.6H29.9V24.7A9.9 9.9 0 0 1 10.1 24.7Z" fill="none" stroke="#fff" stroke-width="2.1" stroke-linejoin="miter"/></svg></div>
<div class="ic" style="left:1540px;top:1476.0px"><svg width="22" height="24" viewBox="0 0 22 24"><path d="M11 1.5c3.2 0 5.4 2.5 5.4 5.8 0 2.6-1.2 4.7-3 5.9 3.9.9 6.6 3.6 6.6 6.6 0 1.6-1 2.6-2.6 2.6H4.6C3 22.4 2 21.4 2 19.8c0-3 2.7-5.7 6.6-6.6-1.8-1.2-3-3.3-3-5.9 0-3.3 2.2-5.8 5.4-5.8z" fill="none" stroke="#6f6f74" stroke-width="1.8" stroke-linejoin="round"/></svg></div>
<div style="position:absolute;left:1844px;top:1442px;width:65px;height:65px;border-radius:50%;background:linear-gradient(240deg,#ff4aae 0%,#f24db8 30%,#c456dc 65%,#9c5ef2 100%);box-shadow:0 0 14px rgba(230,130,230,0.35)"></div>
<div class="ic" style="left:1856.5px;top:1454px"><svg width="40" height="40" viewBox="-20 -20 40 40"><g fill="#fff"><circle cx="10.3" cy="0" r="4.8"/><circle cx="5.15" cy="8.9" r="4.8"/><circle cx="-5.15" cy="8.9" r="4.8"/><circle cx="-10.3" cy="0" r="4.8"/><circle cx="-5.15" cy="-8.9" r="4.8"/><circle cx="5.15" cy="-8.9" r="4.8"/><circle cx="0" cy="0" r="9.5"/></g><path d="M0 -6Q1 -1 6 0Q1 1 0 6Q-1 1 -6 0Q-1 -1 0 -6z" fill="#d94fd0"/></svg></div>
<div class="t semi" id="hdr" style="left:61.50px;top:30.91px;font-size:22.90px;color:#1f1f22;letter-spacing:0.200px;">Documentation &amp; Pr...</div>
<div class="t" id="sb0" style="left:100.90px;top:104.05px;font-size:21.20px;color:#2e2e33;letter-spacing:-0.250px;transform:scaleX(0.9503);transform-origin:0 0;">[CODE-PROC-XXX] | [NOM DE ...</div>
<div class="t" id="sb1" style="left:100.90px;top:155.90px;font-size:21.20px;color:#2e2e33;letter-spacing:-0.250px;transform:scaleX(0.9947);transform-origin:0 0;">SOP - Nomenclature des Docu...</div>
<div class="t" id="sb2" style="left:135.50px;top:207.75px;font-size:21.20px;color:#2e2e33;letter-spacing:-0.250px;transform:scaleX(1.0054);transform-origin:0 0;">Documents Google Drive -...</div>
<div class="t" id="sb3" style="left:100.90px;top:259.60px;font-size:21.20px;color:#2e2e33;letter-spacing:-0.250px;transform:scaleX(0.9833);transform-origin:0 0;">Rédaction des Protocoles Tran...</div>
<div class="t semi" id="sb4" style="left:100.90px;top:311.45px;font-size:21.20px;color:#1f1f22;letter-spacing:-0.250px;transform:scaleX(0.9191);transform-origin:0 0;">DROIT DES AFFAIRES</div>
<div class="t" id="sb5" style="left:119.90px;top:363.30px;font-size:21.20px;color:#2e2e33;letter-spacing:-0.250px;transform:scaleX(0.9563);transform-origin:0 0;">DA-CESS-DRT-001 | Cycle pr...</div>
<div class="t" id="sb6" style="left:119.90px;top:415.15px;font-size:21.20px;color:#2e2e33;letter-spacing:-0.250px;transform:scaleX(0.9427);transform-origin:0 0;">DA-CESS-FDC-001 | Cession ...</div>
<div class="t" id="sb7" style="left:119.90px;top:467.00px;font-size:21.20px;color:#2e2e33;letter-spacing:-0.250px;transform:scaleX(0.9427);transform-origin:0 0;">DA-CESS-FDC-002 | Cession ...</div>
<div class="t" id="sb8" style="left:119.90px;top:518.85px;font-size:21.20px;color:#2e2e33;letter-spacing:-0.250px;transform:scaleX(0.9427);transform-origin:0 0;">DA-CESS-FDC-002 | Cession ...</div>
<div class="t" id="sb9" style="left:119.90px;top:570.70px;font-size:21.20px;color:#2e2e33;letter-spacing:-0.250px;transform:scaleX(0.9620);transform-origin:0 0;">DA-CESS-FDC-004 | Compro...</div>
<div class="t" id="sb10" style="left:119.90px;top:622.55px;font-size:21.20px;color:#2e2e33;letter-spacing:-0.250px;transform:scaleX(0.9587);transform-origin:0 0;">DA-CESS-FDC-005 | Acte de ...</div>
<div class="t" id="sb11" style="left:119.90px;top:674.40px;font-size:21.20px;color:#2e2e33;letter-spacing:-0.250px;transform:scaleX(0.9587);transform-origin:0 0;">DA-CESS-FDC-005 | Acte de ...</div>
<div class="t" id="sb12" style="left:119.90px;top:726.25px;font-size:21.20px;color:#2e2e33;letter-spacing:-0.250px;transform:scaleX(0.9785);transform-origin:0 0;">DA-CGV-001 | Rédaction Co...</div>
<div class="t" id="sb13" style="left:119.90px;top:778.10px;font-size:21.20px;color:#2e2e33;letter-spacing:-0.250px;transform:scaleX(0.9785);transform-origin:0 0;">DA-CGV-002 | Rédaction Co...</div>
<div class="t" id="sb14" style="left:119.90px;top:829.95px;font-size:21.20px;color:#2e2e33;letter-spacing:-0.250px;transform:scaleX(0.9893);transform-origin:0 0;">DA-CGV-003 | Cycle de prod...</div>
<div class="t" id="sb15" style="left:119.90px;top:881.80px;font-size:21.20px;color:#2e2e33;letter-spacing:-0.250px;transform:scaleX(0.9822);transform-origin:0 0;">DA-CGV-004 | Rédaction de ...</div>
<div class="t" id="sb16" style="left:119.90px;top:933.65px;font-size:21.20px;color:#2e2e33;letter-spacing:-0.250px;transform:scaleX(0.9650);transform-origin:0 0;">DA-TRANSF-001 | Transform...</div>
<div class="t" id="sb17" style="left:119.90px;top:985.50px;font-size:21.20px;color:#2e2e33;letter-spacing:-0.250px;transform:scaleX(0.9650);transform-origin:0 0;">DA-TRANSF-002 | Transform...</div>
<div class="t" id="sb18" style="left:119.90px;top:1037.35px;font-size:21.20px;color:#2e2e33;letter-spacing:-0.250px;transform:scaleX(0.9650);transform-origin:0 0;">DA-TRANSF-003 | Transform...</div>
<div class="t" id="sb19" style="left:119.90px;top:1089.20px;font-size:21.20px;color:#2e2e33;letter-spacing:-0.250px;transform:scaleX(0.9650);transform-origin:0 0;">DA-TRANSF-004 | Transform...</div>
<div class="t" id="sb20" style="left:119.90px;top:1141.05px;font-size:21.20px;color:#2e2e33;letter-spacing:-0.250px;transform:scaleX(0.9713);transform-origin:0 0;">DA-TRANSF-005 | Désignati...</div>
<div class="t" id="sb21" style="left:119.90px;top:1192.90px;font-size:21.20px;color:#2e2e33;letter-spacing:-0.250px;transform:scaleX(0.9650);transform-origin:0 0;">DA-TRANSF-006 | Transform...</div>
<div class="t" id="sb22" style="left:119.90px;top:1244.75px;font-size:21.20px;color:#2e2e33;letter-spacing:-0.250px;transform:scaleX(0.9650);transform-origin:0 0;">DA-TRANSF-006 | Transform...</div>
<div class="t" id="sb23" style="left:100.90px;top:1296.60px;font-size:21.20px;color:#2e2e33;letter-spacing:-0.250px;transform:scaleX(0.9057);transform-origin:0 0;">CONTENTIEUX</div>
<div class="t" id="sb24" style="left:119.90px;top:1348.45px;font-size:21.20px;color:#2e2e33;letter-spacing:-0.250px;transform:scaleX(0.9964);transform-origin:0 0;">CT-MARD-001 | Protocole Tr...</div>
<div class="t" id="sb25" style="left:119.90px;top:1400.30px;font-size:21.20px;color:#2e2e33;letter-spacing:-0.250px;transform:scaleX(0.9928);transform-origin:0 0;">CT-MARD-002 | Rédaction P...</div>
<div class="t" id="sb26" style="left:100.90px;top:1452.15px;font-size:21.20px;color:#2e2e33;letter-spacing:-0.250px;transform:scaleX(0.9175);transform-origin:0 0;">DROIT SOCIAL</div>
<div class="t" id="sb27" style="left:119.90px;top:1504.00px;font-size:21.20px;color:#2e2e33;letter-spacing:-0.250px;transform:scaleX(0.9430);transform-origin:0 0;">SO_INFO_SAL_001 | Informat...</div>
<div class="t" id="link" style="left:566.00px;top:324.40px;font-size:20.20px;color:#87878c;letter-spacing:-0.111px;">Link to task or Doc</div>
<div class="t" id="title" style="left:537.00px;top:376.31px;font-size:51.60px;color:#1b1b1e;letter-spacing:-0.600px;transform:scaleX(0.9459);transform-origin:0 0;font-weight:700;">DROIT DES AFFAIRES</div>
<div class="t semi" id="author" style="left:573.50px;top:454.07px;font-size:22.00px;color:#1f1f22;letter-spacing:-0.111px;">Ramzi Tabka (UpSys)</div>
<div class="t" id="lu" style="left:805.00px;top:454.50px;font-size:21.50px;color:#2e2e33;letter-spacing:-0.583px;">Last Updated:</div>
<div class="t semi" id="date" style="left:946.00px;top:454.07px;font-size:22.00px;color:#1f1f22;letter-spacing:-0.418px;">8/7/2025 at 14:56</div>
<div class="t" id="hsub" style="left:553.00px;top:555.54px;font-size:19.80px;color:#7b7b80;letter-spacing:-0.772px;">Subpages</div>
<div class="t" id="hown" style="left:1372.60px;top:555.54px;font-size:19.80px;color:#7b7b80;letter-spacing:-0.500px;">Owner</div>
<div class="t" id="hcon" style="left:1528.00px;top:555.54px;font-size:19.80px;color:#7b7b80;letter-spacing:0.091px;">Contributors</div>
<div class="t semi" id="tr0" style="left:625.00px;top:621.81px;font-size:22.90px;color:#1f1f22;letter-spacing:-0.205px;">DA-CESS-DRT-001 | Cycle production cession droits marque</div>
<div class="t semi" id="tr1" style="left:625.00px;top:699.61px;font-size:22.90px;color:#1f1f22;letter-spacing:-0.580px;">DA-CESS-FDC-001 | Cession de Fonds de Commerce</div>
<div class="t semi" id="tr2" style="left:625.00px;top:777.41px;font-size:22.90px;color:#1f1f22;letter-spacing:-0.258px;">DA-CESS-FDC-002 | Cession ou Acquisition de Fonds de Commerce</div>
<div class="t semi" id="tr3" style="left:625.00px;top:855.21px;font-size:22.90px;color:#1f1f22;letter-spacing:-0.358px;">DA-CESS-FDC-002 | Cession de Fonds de Commerce avec Droit au Bail</div>
<div class="t semi" id="tr4" style="left:625.00px;top:920.21px;font-size:22.90px;color:#1f1f22;letter-spacing:-0.323px;">DA-CESS-FDC-004 | Compromis de cession FDC avec conditions</div>
<div class="t semi" id="tr4b" style="left:625.00px;top:946.01px;font-size:22.90px;color:#1f1f22;letter-spacing:-0.700px;">suspensives</div>
<div class="t semi" id="tr5" style="left:625.00px;top:1010.81px;font-size:22.90px;color:#1f1f22;letter-spacing:-0.296px;">DA-CESS-FDC-005 | Acte de Cession de Droit au Bail</div>
<div class="t semi" id="tr6" style="left:625.00px;top:1088.61px;font-size:22.90px;color:#1f1f22;letter-spacing:-0.205px;">DA-CESS-FDC-005 | Acte de cession de fonds de commerce standard</div>
<div class="t semi" id="tr7" style="left:625.00px;top:1166.41px;font-size:22.90px;color:#1f1f22;letter-spacing:-0.186px;">DA-CGV-001 | Rédaction Conditions Générales de Vente</div>
<div class="t semi" id="tr8" style="left:625.00px;top:1244.21px;font-size:22.90px;color:#1f1f22;letter-spacing:-0.116px;">DA-CGV-002 | Rédaction Conditions Générales de Vente</div>
<div class="t semi" id="tr9" style="left:625.00px;top:1322.01px;font-size:22.90px;color:#1f1f22;letter-spacing:-0.143px;">DA-CGV-003 | Cycle de production - Rédaction CGV</div>
<div class="t semi" id="tr10" style="left:625.00px;top:1399.81px;font-size:22.90px;color:#1f1f22;letter-spacing:-0.115px;">DA-CGV-004 | Rédaction de Conditions Générales de Vente</div>
<div class="t semi" id="tr11" style="left:625.00px;top:1477.61px;font-size:22.90px;color:#1f1f22;letter-spacing:-0.328px;">DA-TRANSF-001 | Transformation de Société en SAS</div>
<div class="t" id="share" style="left:1518.50px;top:30.81px;font-size:22.90px;color:#ffffff;letter-spacing:-0.300px;transform:scaleX(0.9060);transform-origin:0 0;font-weight:700;">Share</div>
</body></html>
